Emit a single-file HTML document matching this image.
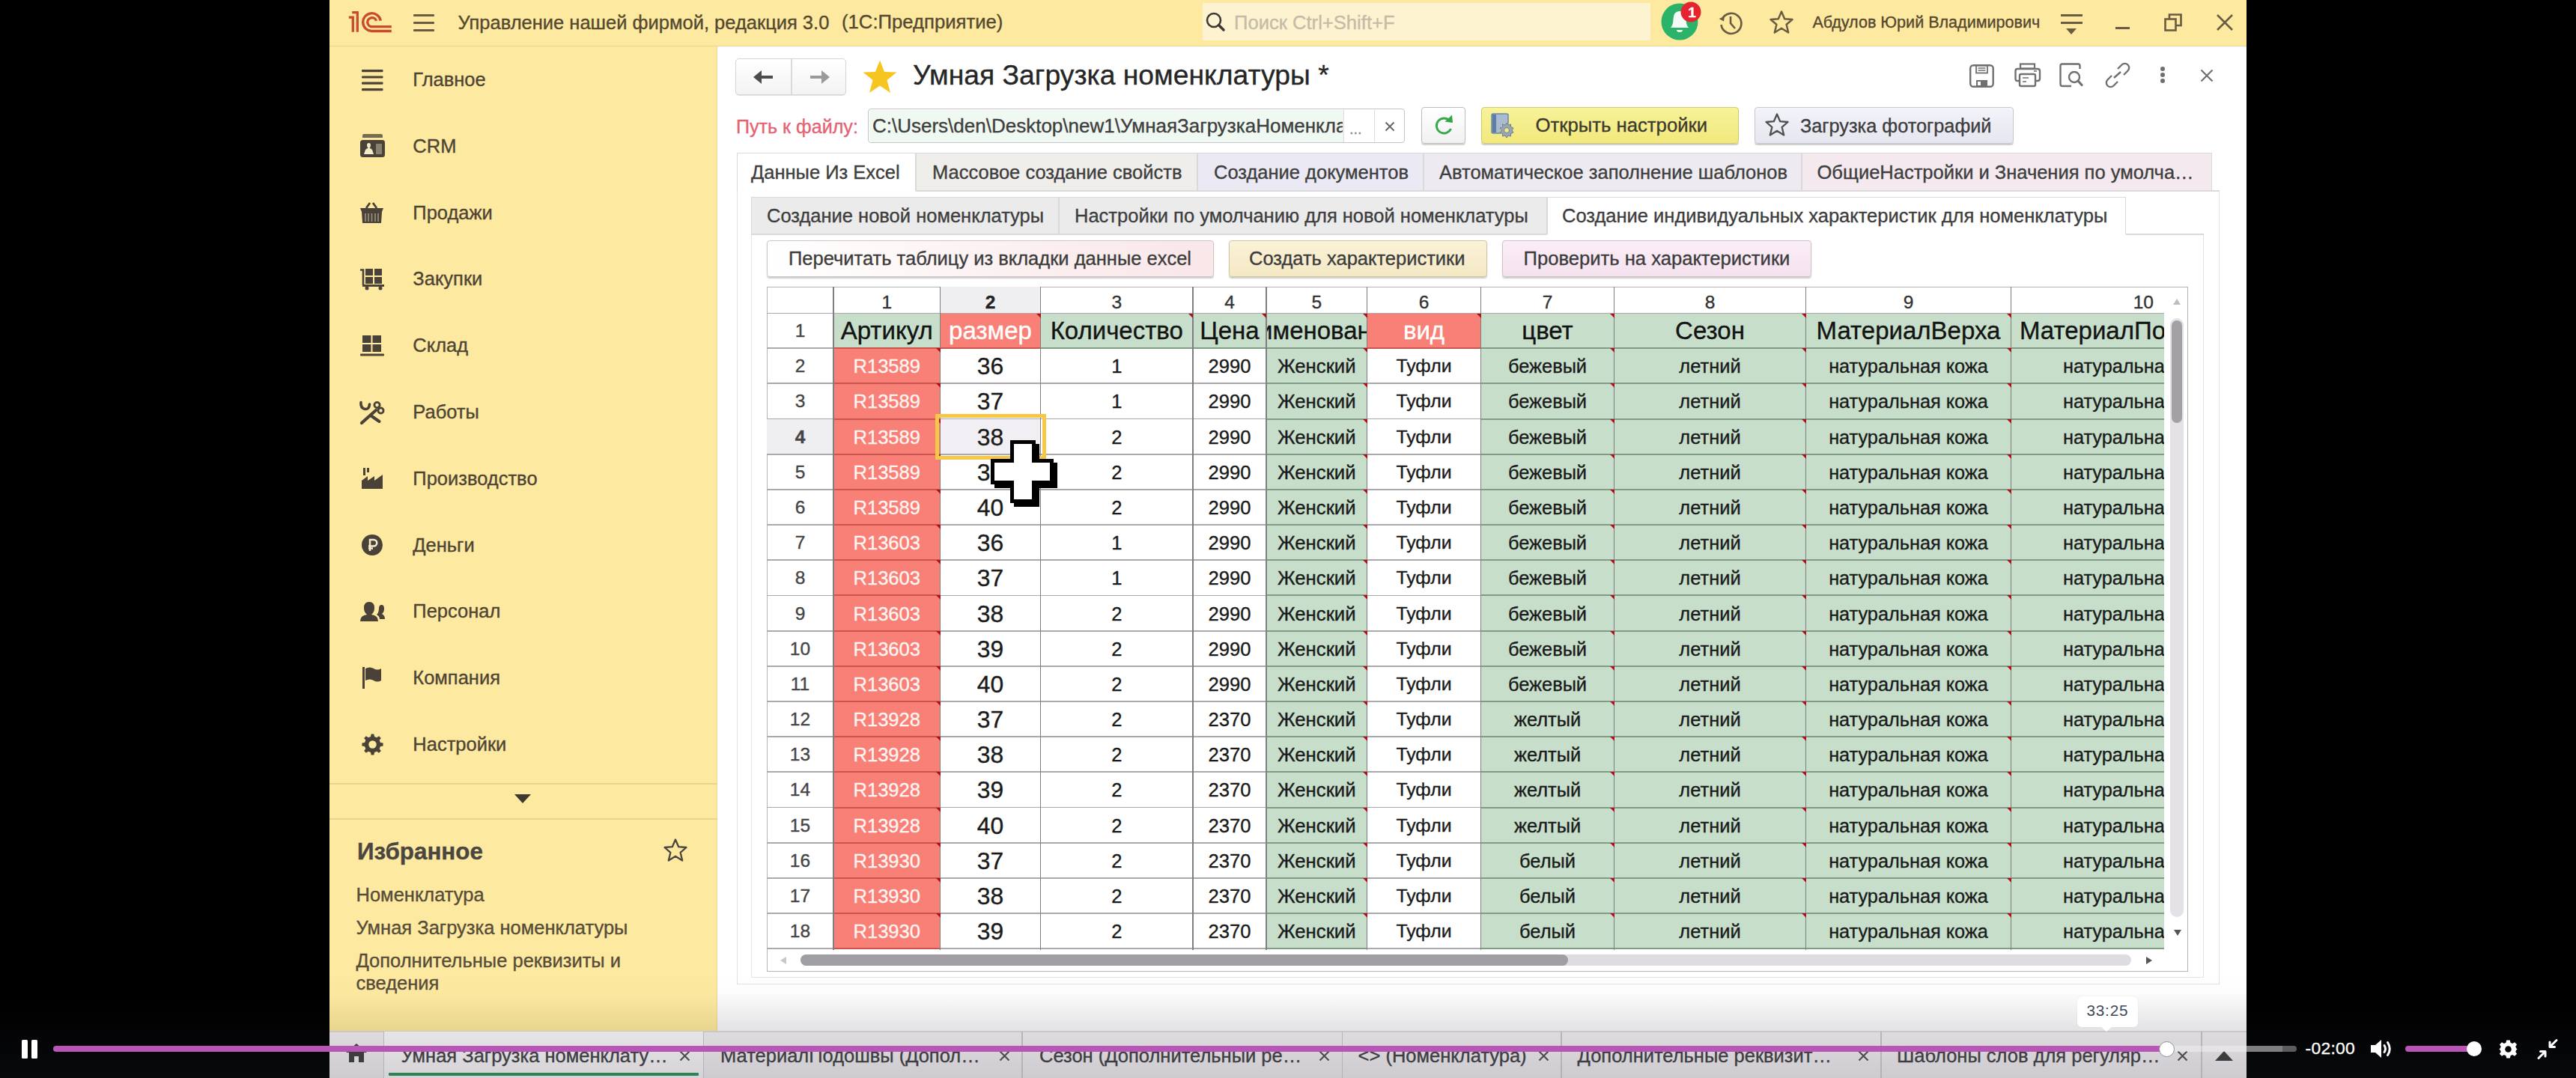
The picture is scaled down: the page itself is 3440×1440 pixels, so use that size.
<!DOCTYPE html><html><head><meta charset="utf-8"><style>
*{box-sizing:border-box;margin:0;padding:0}
html,body{width:3440px;height:1440px;overflow:hidden;background:#000;font-family:"Liberation Sans",sans-serif}
.t{position:absolute;white-space:pre;-webkit-text-stroke:0.35px currentColor}
.b{position:absolute}
svg{position:absolute;overflow:visible}
.tb .t{-webkit-text-stroke:0.35px currentColor}
</style></head><body>
<div class="b" style="left:440px;top:0px;width:2560px;height:1440px;background:#fff"></div>
<div class="b" style="left:440px;top:0px;width:2560px;height:61.5px;background:#FDE9A0;border-bottom:1.5px solid #E9D48C"></div>
<div class="b" style="left:440px;top:61.5px;width:518px;height:1316.5px;background:#FDE9A0;border-right:1px solid #EAD795"></div>
<svg style="left:465px;top:14px" width="62" height="32" viewBox="0 0 62 32">
<g fill="none" stroke="#C94A2D" stroke-width="3.3" stroke-linecap="butt" stroke-linejoin="miter">
<path d="M0.8 9.2 H6.3 V28.8"/><path d="M5.2 2.6 H12.3 V28.8"/>
<path d="M43.3 13.6 A11.9 11.9 0 1 0 31.8 27.5 H57.8"/>
<path d="M37.6 13.8 A6.05 6.05 0 1 0 32.25 21.7 H57.8"/>
</g></svg>
<div class="b" style="left:552px;top:18.799999999999997px;width:28px;height:3.2px;background:#6A5C42;border-radius:1px"></div>
<div class="b" style="left:552px;top:29.0px;width:28px;height:3.2px;background:#6A5C42;border-radius:1px"></div>
<div class="b" style="left:552px;top:38.8px;width:28px;height:3.2px;background:#6A5C42;border-radius:1px"></div>
<div class="t" style="left:611.5px;top:9.5px;height:40px;line-height:40px;font-size:25.5px;color:#54482F;">Управление нашей фирмой, редакция 3.0</div>
<div class="t" style="left:1124px;top:9.0px;height:41px;line-height:41px;font-size:25.7px;color:#54482F;">(1С:Предприятие)</div>
<div class="b" style="left:1606px;top:4px;width:598px;height:50px;background:#FEF3D0;border-radius:2px"></div>
<svg style="left:1610px;top:16px" width="30" height="30" viewBox="0 0 30 30">
<circle cx="11" cy="11" r="9" fill="none" stroke="#3E3A33" stroke-width="2.6"/>
<path d="M17.5 17.5 L24 24" stroke="#3E3A33" stroke-width="3.5" stroke-linecap="round"/></svg>
<div class="t" style="left:1648px;top:10.0px;height:40px;line-height:40px;font-size:25.6px;color:#C4BCA8;">Поиск Ctrl+Shift+F</div>
<svg style="left:2218px;top:4px" width="56" height="52" viewBox="0 0 56 52">
<circle cx="25" cy="25" r="24.5" fill="#2BB36A"/>
<path d="M13 33 C17 29 16 22 17 18 C18 13 21 11 25 11 C29 11 32 13 33 18 C34 22 33 29 37 33 Z" fill="#F4FBF6"/>
<path d="M21 36 H29 A4 3 0 0 1 21 36Z" fill="#F4FBF6"/>
<circle cx="40" cy="12" r="13.5" fill="#E52430"/>
</svg>
<div class="t" style="left:2253.5px;top:4.5px;height:24px;line-height:24px;font-size:19px;color:#fff;font-weight:700;width:12px;text-align:center;">1</div>
<svg style="left:2294px;top:13px" width="36" height="36" viewBox="0 0 36 36">
<path d="M5.5 13 A13.5 13.5 0 1 1 4.5 20" fill="none" stroke="#6A5C42" stroke-width="2.6"/>
<path d="M1.5 12 L8 15.5 L9 9 Z" fill="#6A5C42"/>
<path d="M17 9 V18 L23 25" fill="none" stroke="#6A5C42" stroke-width="2.6"/></svg>
<svg style="left:2362px;top:13px" width="34" height="34" viewBox="0 0 34 34">
<path d="M17 2.5 L21.2 12.2 L31.5 13 L23.6 19.8 L26.2 30.5 L17 24.8 L7.8 30.5 L10.4 19.8 L2.5 13 L12.8 12.2 Z" fill="none" stroke="#6A5C42" stroke-width="2.5" stroke-linejoin="round"/></svg>
<div class="t" style="left:2420.5px;top:12.5px;height:34px;line-height:34px;font-size:21.55px;color:#54482F;">Абдулов Юрий Владимирович</div>
<div class="b" style="left:2752px;top:18.8px;width:29px;height:3px;background:#6A5C42"></div>
<div class="b" style="left:2752px;top:28.8px;width:29px;height:3px;background:#6A5C42"></div>
<svg style="left:2759px;top:38px" width="14" height="9" viewBox="0 0 14 9"><path d="M0 0 H14 L7 8 Z" fill="#6A5C42"/></svg>
<div class="b" style="left:2825px;top:36px;width:19px;height:3.2px;background:#6A5C42"></div>
<svg style="left:2890px;top:18px" width="25" height="25" viewBox="0 0 25 25">
<rect x="1.5" y="7.5" width="14" height="15" fill="none" stroke="#6A5C42" stroke-width="2.6"/>
<path d="M7 7 V1.5 H22.5 V16 H16" fill="none" stroke="#6A5C42" stroke-width="2.6"/></svg>
<svg style="left:2960px;top:19px" width="22" height="22" viewBox="0 0 22 22">
<path d="M1 1 L21 21 M21 1 L1 21" stroke="#6A5C42" stroke-width="2.6"/></svg>
<svg style="left:482px;top:93px" width="36" height="36" viewBox="0 0 36 36" fill="#4A4238"><rect x="1" y="0" width="28.5" height="3.2" rx="1"/><rect x="1" y="8.4" width="28.5" height="3.2" rx="1"/><rect x="1" y="16.5" width="28.5" height="3.2" rx="1"/><rect x="1" y="25" width="28.5" height="3.2" rx="1"/></svg>
<div class="t" style="left:551.3px;top:86.0px;height:40px;line-height:40px;font-size:25.5px;color:#4E4434;">Главное</div>
<svg style="left:480.5px;top:179px" width="36" height="36" viewBox="0 0 36 36" fill="#4A4238"><path d="M3 2 Q3 0 5 0 H28 Q30 0 30 2 V5 H3Z" opacity="0.75"/><rect x="0" y="8" width="33" height="23" rx="3.5"/><path d="M5 27 L7 21 Q9 19 10.5 19 Q9 17 9 15 Q9 12 11.5 12 Q14 12 14 15 Q14 17 12.5 19 Q14 19 16 21 L18 27Z" fill="#F4EBC8"/><rect x="21" y="13" width="8" height="14" fill="#8A8070"/></svg>
<div class="t" style="left:551.3px;top:174.8px;height:40px;line-height:40px;font-size:25.5px;color:#4E4434;">CRM</div>
<svg style="left:481px;top:270px" width="36" height="36" viewBox="0 0 36 36" fill="#4A4238"><path d="M8 8 L13 1 M22 8 L17 1" stroke="#4A4238" stroke-width="2.8" fill="none"/><path d="M0 8 H31 L29 13 H2Z"/><path d="M2 13 H29 L28 28 H3Z"/><path d="M7 15 V26 M11 15 V26 M15.5 15 V26 M20 15 V26 M24 15 V26" stroke="#9C917D" stroke-width="1.6"/></svg>
<div class="t" style="left:551.3px;top:263.6px;height:40px;line-height:40px;font-size:25.5px;color:#4E4434;">Продажи</div>
<svg style="left:480.5px;top:358.5px" width="36" height="36" viewBox="0 0 36 36" fill="#4A4238"><path d="M0 1.5 H4 V22" stroke="#4A4238" stroke-width="2.6" fill="none"/><rect x="7" y="0" width="10" height="9"/><rect x="19" y="0" width="10" height="9"/><rect x="7" y="11" width="10" height="9"/><rect x="19" y="11" width="10" height="9"/><rect x="3" y="21" width="29" height="3"/><circle cx="9" cy="26" r="2.5"/><circle cx="27" cy="26" r="2.5"/></svg>
<div class="t" style="left:551.3px;top:352.4px;height:40px;line-height:40px;font-size:25.5px;color:#4E4434;">Закупки</div>
<svg style="left:480.5px;top:447.5px" width="36" height="36" viewBox="0 0 36 36" fill="#4A4238"><rect x="3" y="0" width="11.5" height="10"/><rect x="16.5" y="0" width="11.5" height="10"/><rect x="3" y="12" width="11.5" height="10"/><rect x="16.5" y="12" width="11.5" height="10"/><rect x="0" y="24.5" width="32" height="3" rx="1"/></svg>
<div class="t" style="left:551.3px;top:441.2px;height:40px;line-height:40px;font-size:25.5px;color:#4E4434;">Склад</div>
<svg style="left:480px;top:536px" width="36" height="36" viewBox="0 0 36 36" fill="#4A4238"><path d="M2 1.5 Q1 9 7.5 10.5 Q13 11 13.5 4" stroke="#4A4238" stroke-width="3.6" fill="none" stroke-linecap="round"/><path d="M3 29 L22 12" stroke="#4A4238" stroke-width="4.2" stroke-linecap="round"/><path d="M15 19 L26.5 27" stroke="#4A4238" stroke-width="4" stroke-linecap="round"/><circle cx="23.5" cy="5" r="3.6" fill="none" stroke="#4A4238" stroke-width="2.8"/><circle cx="28.5" cy="12.5" r="3.6" fill="none" stroke="#4A4238" stroke-width="2.8"/></svg>
<div class="t" style="left:551.3px;top:530.0px;height:40px;line-height:40px;font-size:25.5px;color:#4E4434;">Работы</div>
<svg style="left:482.5px;top:624.5px" width="36" height="36" viewBox="0 0 36 36" fill="#4A4238"><path d="M0 28 V17 L8 11 V17 L17 11 V17 L28 9 V28Z"/><rect x="2" y="0" width="3" height="10"/><rect x="7" y="0" width="3" height="6"/></svg>
<div class="t" style="left:551.3px;top:618.8px;height:40px;line-height:40px;font-size:25.5px;color:#4E4434;">Производство</div>
<svg style="left:482.7px;top:713.5px" width="36" height="36" viewBox="0 0 36 36" fill="#4A4238"><circle cx="14" cy="14" r="14"/><path d="M11 22 V7 H16 A4.2 4.2 0 0 1 16 15.5 H9 M9 18.5 H15" stroke="#F4EBC8" stroke-width="2.5" fill="none"/></svg>
<div class="t" style="left:551.3px;top:707.6px;height:40px;line-height:40px;font-size:25.5px;color:#4E4434;">Деньги</div>
<svg style="left:480.7px;top:802px" width="36" height="36" viewBox="0 0 36 36" fill="#4A4238"><path d="M0 28 Q0 20 9 19 Q5 16 5 10 Q5 2 12 2 Q19 2 19 10 Q19 16 15 19 Q24 20 24 28Z"/><path d="M22 19 Q25 16 25 11 Q25 6 28.5 6 Q32 6 32 11 Q32 16 29 18 Q33 20 33 25 H26 Q26 21 22 19Z"/></svg>
<div class="t" style="left:551.3px;top:796.4px;height:40px;line-height:40px;font-size:25.5px;color:#4E4434;">Персонал</div>
<svg style="left:484px;top:890.5px" width="36" height="36" viewBox="0 0 36 36" fill="#4A4238"><rect x="0" y="0" width="3" height="29"/><path d="M4 2 Q10 -1 15 2 Q20 5 25 2 V18 Q20 21 15 18 Q10 15 4 18Z"/></svg>
<div class="t" style="left:551.3px;top:885.2px;height:40px;line-height:40px;font-size:25.5px;color:#4E4434;">Компания</div>
<svg style="left:482.8px;top:980px" width="36" height="36" viewBox="0 0 36 36" fill="#4A4238"><path d="M25.00 11.98 L28.57 12.61 L28.57 16.39 L25.00 17.02 L23.71 20.14 L25.79 23.11 L23.11 25.79 L20.14 23.71 L17.02 25.00 L16.39 28.57 L12.61 28.57 L11.98 25.00 L8.86 23.71 L5.89 25.79 L3.21 23.11 L5.29 20.14 L4.00 17.02 L0.43 16.39 L0.43 12.61 L4.00 11.98 L5.29 8.86 L3.21 5.89 L5.89 3.21 L8.86 5.29 L11.98 4.00 L12.61 0.43 L16.39 0.43 L17.02 4.00 L20.14 5.29 L23.11 3.21 L25.79 5.89 L23.71 8.86Z"/><circle cx="14.5" cy="14.5" r="5.2" fill="#FDE9A0"/></svg>
<div class="t" style="left:551.3px;top:974.0px;height:40px;line-height:40px;font-size:25.5px;color:#4E4434;">Настройки</div>
<div class="b" style="left:440px;top:1046px;width:518px;height:2px;background:#E9D48E"></div>
<div class="b" style="left:440px;top:1092.5px;width:518px;height:2px;background:#E9D48E"></div>
<svg style="left:687px;top:1061px" width="22" height="14" viewBox="0 0 22 14"><path d="M0 0 H22 L11 12Z" fill="#3E3830"/></svg>
<div class="t" style="left:477px;top:1113.0px;height:50px;line-height:50px;font-size:31.4px;color:#4A4640;font-weight:700;">Избранное</div>
<svg style="left:885px;top:1119px" width="34" height="34" viewBox="0 0 34 34">
<path d="M17 2.5 L21.2 12.2 L31.5 13 L23.6 19.8 L26.2 30.5 L17 24.8 L7.8 30.5 L10.4 19.8 L2.5 13 L12.8 12.2 Z" fill="none" stroke="#4A4640" stroke-width="2.3" stroke-linejoin="round"/></svg>
<div class="t" style="left:475.5px;top:1175.0px;height:40px;line-height:40px;font-size:25.5px;color:#574C38;">Номенклатура</div>
<div class="t" style="left:475.5px;top:1219.0px;height:40px;line-height:40px;font-size:25.5px;color:#574C38;">Умная Загрузка номенклатуры</div>
<div class="t" style="left:475.5px;top:1263.0px;height:40px;line-height:40px;font-size:25.5px;color:#574C38;">Дополнительные реквизиты и</div>
<div class="t" style="left:475.5px;top:1293.0px;height:40px;line-height:40px;font-size:25.5px;color:#574C38;">сведения</div>
<div class="b" style="left:982px;top:78px;width:147.5px;height:49px;border:1.5px solid #D6D4DC;border-radius:5px;background:linear-gradient(#FFFFFF,#F3F3F3);box-shadow:0 1px 1px rgba(0,0,0,0.12)"></div>
<div class="b" style="left:1056px;top:79px;width:1.5px;height:47px;background:#DADADA"></div>
<svg style="left:1006px;top:92px" width="28" height="22" viewBox="0 0 28 22"><path d="M26 11 H8" stroke="#4D4D4D" stroke-width="4"/><path d="M0 11 L11 2 V20Z" fill="#4D4D4D"/></svg>
<svg style="left:1080px;top:92px" width="28" height="22" viewBox="0 0 28 22"><path d="M2 11 H20" stroke="#9A9A9A" stroke-width="4"/><path d="M28 11 L17 2 V20Z" fill="#9A9A9A"/></svg>
<svg style="left:1150px;top:79px" width="50" height="48" viewBox="0 0 50 48">
<path d="M25 1.5 L31 17 L47.5 17.5 L34.5 28 L39 45 L25 35.5 L11 45 L15.5 28 L2.5 17.5 L19 17 Z" fill="#F7C520"/></svg>
<div class="t" style="left:1219px;top:71.3px;height:59px;line-height:59px;font-size:37.3px;color:#262626;">Умная Загрузка номенклатуры *</div>
<svg style="left:2630px;top:86px" width="34" height="31" viewBox="0 0 34 31">
<rect x="1.2" y="1.2" width="30.5" height="28.5" rx="4" fill="none" stroke="#707070" stroke-width="2.4"/>
<rect x="9" y="1.5" width="15" height="10" fill="none" stroke="#707070" stroke-width="1.8"/>
<path d="M11.5 5 H21.5 M11.5 8 H21.5" stroke="#707070" stroke-width="1.4"/>
<rect x="9" y="21" width="15" height="8" fill="#707070"/><rect x="11" y="23" width="4" height="5" fill="#fff"/></svg>
<svg style="left:2690px;top:84px" width="36" height="33" viewBox="0 0 36 33">
<rect x="8" y="1.5" width="19" height="6" fill="none" stroke="#707070" stroke-width="2.2"/>
<path d="M7 24 H4 Q1.5 24 1.5 21 V11 Q1.5 8 4 8 H31 Q34 8 34 11 V21 Q34 24 31 24 H28" fill="none" stroke="#707070" stroke-width="2.4"/>
<rect x="7" y="15" width="21" height="16" rx="2" fill="#fff" stroke="#707070" stroke-width="2.4"/>
<path d="M11 20 H19 M11 25 H16 M26 11 H30" stroke="#707070" stroke-width="1.5"/></svg>
<svg style="left:2750px;top:84px" width="36" height="33" viewBox="0 0 36 33">
<path d="M16 31 H4 Q1.5 31 1.5 28 V4 Q1.5 1.5 4 1.5 H25 Q27.5 1.5 27.5 4 V8" fill="none" stroke="#707070" stroke-width="2.4"/>
<circle cx="20" cy="19" r="7" fill="none" stroke="#707070" stroke-width="2.4"/>
<path d="M25 24 L30 29.5" stroke="#707070" stroke-width="3.2" stroke-linecap="round"/></svg>
<svg style="left:2810px;top:84px" width="36" height="33" viewBox="0 0 36 33">
<path d="M13 20 L22 12" stroke="#707070" stroke-width="2.4"/>
<path d="M10 17 L4.5 22.5 A5.5 5.5 0 0 0 12.5 30.5 L18 25" fill="none" stroke="#707070" stroke-width="2.4"/>
<path d="M18 8 L23.5 2.5 A5.5 5.5 0 0 1 31.5 10.5 L26 16" fill="none" stroke="#707070" stroke-width="2.4"/></svg>
<div class="b" style="left:2884.5px;top:88.7px;width:6px;height:6px;background:#707070;border-radius:50%"></div>
<div class="b" style="left:2884.5px;top:97px;width:6px;height:6px;background:#707070;border-radius:50%"></div>
<div class="b" style="left:2884.5px;top:105.3px;width:6px;height:6px;background:#707070;border-radius:50%"></div>
<svg style="left:2938px;top:92px" width="18" height="18" viewBox="0 0 18 18"><path d="M1.5 1.5 L16.5 16.5 M16.5 1.5 L1.5 16.5" stroke="#707070" stroke-width="2.2"/></svg>
<div class="t" style="left:983px;top:148.5px;height:40px;line-height:40px;font-size:25.1px;color:#E46272;">Путь к файлу:</div>
<div class="b" style="left:1159px;top:145px;width:717px;height:46px;border:1.5px solid #C6C4CA;border-radius:4px;background:#fff"></div>
<div class="b" style="left:1160.5px;top:146.5px;width:633px;height:43px;background:#EFF9F1"></div>
<div class="b" style="left:1793.5px;top:146.5px;width:1.5px;height:43px;background:#DCDCDC"></div>
<div class="b" style="left:1834.5px;top:146.5px;width:1.5px;height:43px;background:#DCDCDC"></div>
<div class="t" style="left:1165px;top:147px;width:628px;height:43px;line-height:43px;font-size:26px;color:#3E3E3E;overflow:hidden">C:\Users\den\Desktop\new1\УмнаяЗагрузкаНоменклатуры.xlsx</div>
<div class="t" style="left:1802px;top:156.0px;height:32px;line-height:32px;font-size:20px;color:#8A8A8A;">...</div>
<svg style="left:1849px;top:162px" width="14" height="14" viewBox="0 0 14 14"><path d="M1.5 1.5 L12.5 12.5 M12.5 1.5 L1.5 12.5" stroke="#666" stroke-width="2"/></svg>
<div class="b" style="left:1898px;top:143px;width:58.5px;height:48.5px;border:1.5px solid #BFBDC3;border-radius:4px;background:linear-gradient(#FFFFFF,#F1F1F1);box-shadow:0 1.5px 1px rgba(0,0,0,0.18)"></div>
<svg style="left:1913px;top:153px" width="30" height="30" viewBox="0 0 30 30">
<path d="M23 8.5 A10 10 0 1 0 24.5 19" fill="none" stroke="#38A84C" stroke-width="2.9"/>
<path d="M16.5 9.5 L27 11 L26 0.5Z" fill="#32A64A"/></svg>
<div class="b" style="left:1978px;top:143px;width:344px;height:48.5px;border:1.5px solid #CFC77A;border-radius:4px;background:linear-gradient(#F8F29A,#F1E97C);box-shadow:0 1.5px 1px rgba(0,0,0,0.2)"></div>
<svg style="left:1990px;top:150px" width="36" height="36" viewBox="0 0 36 36">
<rect x="2" y="2" width="22" height="26" rx="2" fill="#A9BBD3" stroke="#6E86A8" stroke-width="1.5"/>
<rect x="3" y="3" width="5" height="24" fill="#5E7EA8"/>
<circle cx="22" cy="24" r="9" fill="#F1EA80"/>
<path d="M22 14 L24 17 L27.5 16 L27.5 19.5 L31 21 L29 24 L31 27 L27.5 28.5 L27.5 32 L24 31 L22 34 L20 31 L16.5 32 L16.5 28.5 L13 27 L15 24 L13 21 L16.5 19.5 L16.5 16 L20 17Z" fill="#9AA6B5" stroke="#6F7D90" stroke-width="1"/>
<circle cx="22" cy="24" r="3.5" fill="#F1EA80" stroke="#6F7D90" stroke-width="1"/></svg>
<div class="t" style="left:2050.5px;top:147.0px;height:41px;line-height:41px;font-size:25.7px;color:#3D3A2E;">Открыть настройки</div>
<div class="b" style="left:2343px;top:143px;width:345.5px;height:48.5px;border:1.5px solid #C8C8D2;border-radius:4px;background:linear-gradient(#F3F3FA,#E6E6F0);box-shadow:0 1.5px 1px rgba(0,0,0,0.2)"></div>
<svg style="left:2356px;top:150px" width="34" height="34" viewBox="0 0 34 34">
<path d="M17 2.5 L21.2 12.2 L31.5 13 L23.6 19.8 L26.2 30.5 L17 24.8 L7.8 30.5 L10.4 19.8 L2.5 13 L12.8 12.2 Z" fill="none" stroke="#505050" stroke-width="2.3" stroke-linejoin="round"/></svg>
<div class="t" style="left:2404px;top:147.5px;height:40px;line-height:40px;font-size:25.3px;color:#3D3D3D;">Загрузка фотографий</div>
<div class="b" style="left:984px;top:254.5px;width:1980px;height:1060px;border:1.5px solid #E2E2E2;border-top:none;background:#fff"></div>
<div class="b" style="left:984px;top:204px;width:239px;height:51px;background:#FFFFFF;border:1.5px solid #DADADA;border-bottom:none;"></div>
<div class="t" style="left:1003px;top:209.5px;height:40px;line-height:40px;font-size:25.5px;color:#3E3E3E;">Данные Из Excel</div>
<div class="b" style="left:1223px;top:204px;width:376px;height:51px;background:#F0EEEA;border:1.5px solid #DADADA;"></div>
<div class="t" style="left:1245px;top:209.5px;height:40px;line-height:40px;font-size:25.5px;color:#3E3E3E;">Массовое создание свойств</div>
<div class="b" style="left:1599px;top:204px;width:302px;height:51px;background:#EAE9F4;border:1.5px solid #DADADA;"></div>
<div class="t" style="left:1621px;top:209.5px;height:40px;line-height:40px;font-size:25.5px;color:#3E3E3E;">Создание документов</div>
<div class="b" style="left:1901px;top:204px;width:505px;height:51px;background:#EDEBF1;border:1.5px solid #DADADA;"></div>
<div class="t" style="left:1922px;top:209.5px;height:40px;line-height:40px;font-size:25.5px;color:#3E3E3E;">Автоматическое заполнение шаблонов</div>
<div class="b" style="left:2406px;top:204px;width:548px;height:51px;background:#F3E9EE;border:1.5px solid #DADADA;"></div>
<div class="t" style="left:2426.5px;top:209.5px;height:40px;line-height:40px;font-size:25.5px;color:#3E3E3E;">ОбщиеНастройки и Значения по умолча…</div>
<div class="b" style="left:1223px;top:254px;width:1741px;height:1.5px;background:#DADADA"></div>
<div class="b" style="left:1003px;top:312.5px;width:1940px;height:993.5px;border:1.5px solid #E4E4E4;border-top:none;background:#fff"></div>
<div class="b" style="left:1003px;top:262.5px;width:410.5999999999999px;height:50.5px;background:#EBEBEB;border:1.5px solid #DADADA;"></div>
<div class="t" style="left:1024px;top:268.0px;height:40px;line-height:40px;font-size:25.5px;color:#3E3E3E;">Создание новой номенклатуры</div>
<div class="b" style="left:1413.6px;top:262.5px;width:652.0999999999999px;height:50.5px;background:#EBEBEB;border:1.5px solid #DADADA;"></div>
<div class="t" style="left:1435px;top:268.0px;height:40px;line-height:40px;font-size:25.5px;color:#3E3E3E;">Настройки по умолчанию для новой номенклатуры</div>
<div class="b" style="left:2065.7px;top:262.5px;width:772.9000000000001px;height:50.5px;background:#FFFFFF;border:1.5px solid #DADADA;border-bottom:none;"></div>
<div class="t" style="left:2086px;top:268.0px;height:40px;line-height:40px;font-size:25.5px;color:#3E3E3E;">Создание индивидуальных характеристик для номенклатуры</div>
<div class="b" style="left:1003px;top:312px;width:1062.7px;height:1.5px;background:#DADADA"></div>
<div class="b" style="left:2838.6px;top:312px;width:104.4px;height:1.5px;background:#DADADA"></div>
<div class="b" style="left:1024px;top:320.7px;width:597.3px;height:49px;border:1.5px solid #CFC5C7;border-radius:4px;background:linear-gradient(90deg,#FFFFFF,#FCEFF0 60%,#F9E7EA);box-shadow:0 1.5px 1.5px rgba(0,0,0,0.2)"></div>
<div class="t" style="left:1053px;top:325.0px;height:40px;line-height:40px;font-size:25.5px;color:#3C3C3C;">Перечитать таблицу из вкладки данные excel</div>
<div class="b" style="left:1640.7px;top:320.7px;width:345.29999999999995px;height:49px;border:1.5px solid #CFC6A8;border-radius:4px;background:linear-gradient(#FBF3D8,#F4E8C4);box-shadow:0 1.5px 1.5px rgba(0,0,0,0.2)"></div>
<div class="t" style="left:1668px;top:325.0px;height:40px;line-height:40px;font-size:25.5px;color:#3C3C3C;">Создать характеристики</div>
<div class="b" style="left:2006px;top:320.7px;width:413px;height:49px;border:1.5px solid #CEC3CB;border-radius:4px;background:linear-gradient(#FBEEF7,#F5E2EF);box-shadow:0 1.5px 1.5px rgba(0,0,0,0.2)"></div>
<div class="t" style="left:2034.6px;top:325.0px;height:40px;line-height:40px;font-size:25.6px;color:#3C3C3C;">Проверить на характеристики</div>
<div class="b" style="left:1024px;top:382.5px;width:1898px;height:915.5px;border:1.5px solid #B4B4B4;background:#fff"></div>
<div class="b tb" style="left:1024px;top:382.5px;width:1866px;height:886.0px;overflow:hidden">
<div class="b" style="left:231.50px;top:0.00px;width:134.00px;height:36.00px;background:#EFEEF1"></div>
<div class="b" style="left:0.00px;top:177.06px;width:89.00px;height:47.18px;background:#EFEEF1"></div>
<div class="b" style="left:89.00px;top:36.00px;width:142.50px;height:46.70px;background:#C6DECA"></div>
<div class="b" style="left:231.50px;top:36.00px;width:134.00px;height:46.70px;background:#F88077"></div>
<div class="b" style="left:365.50px;top:36.00px;width:203.50px;height:46.70px;background:#C6DECA"></div>
<div class="b" style="left:569.00px;top:36.00px;width:98.00px;height:46.70px;background:#C6DECA"></div>
<div class="b" style="left:667.00px;top:36.00px;width:134.50px;height:46.70px;background:#C6DECA"></div>
<div class="b" style="left:801.50px;top:36.00px;width:152.00px;height:46.70px;background:#F88077"></div>
<div class="b" style="left:953.50px;top:36.00px;width:178.00px;height:46.70px;background:#C6DECA"></div>
<div class="b" style="left:1131.50px;top:36.00px;width:256.00px;height:46.70px;background:#C6DECA"></div>
<div class="b" style="left:1387.50px;top:36.00px;width:274.00px;height:46.70px;background:#C6DECA"></div>
<div class="b" style="left:1661.50px;top:36.00px;width:274.50px;height:46.70px;background:#C6DECA"></div>
<div class="b" style="left:89.00px;top:82.70px;width:142.50px;height:47.18px;background:#F88077"></div>
<div class="b" style="left:667.00px;top:82.70px;width:134.50px;height:47.18px;background:#C6DECA"></div>
<div class="b" style="left:953.50px;top:82.70px;width:178.00px;height:47.18px;background:#C6DECA"></div>
<div class="b" style="left:1131.50px;top:82.70px;width:256.00px;height:47.18px;background:#C6DECA"></div>
<div class="b" style="left:1387.50px;top:82.70px;width:274.00px;height:47.18px;background:#C6DECA"></div>
<div class="b" style="left:1661.50px;top:82.70px;width:274.50px;height:47.18px;background:#C6DECA"></div>
<div class="b" style="left:89.00px;top:129.88px;width:142.50px;height:47.18px;background:#F88077"></div>
<div class="b" style="left:667.00px;top:129.88px;width:134.50px;height:47.18px;background:#C6DECA"></div>
<div class="b" style="left:953.50px;top:129.88px;width:178.00px;height:47.18px;background:#C6DECA"></div>
<div class="b" style="left:1131.50px;top:129.88px;width:256.00px;height:47.18px;background:#C6DECA"></div>
<div class="b" style="left:1387.50px;top:129.88px;width:274.00px;height:47.18px;background:#C6DECA"></div>
<div class="b" style="left:1661.50px;top:129.88px;width:274.50px;height:47.18px;background:#C6DECA"></div>
<div class="b" style="left:89.00px;top:177.06px;width:142.50px;height:47.18px;background:#F88077"></div>
<div class="b" style="left:667.00px;top:177.06px;width:134.50px;height:47.18px;background:#C6DECA"></div>
<div class="b" style="left:953.50px;top:177.06px;width:178.00px;height:47.18px;background:#C6DECA"></div>
<div class="b" style="left:1131.50px;top:177.06px;width:256.00px;height:47.18px;background:#C6DECA"></div>
<div class="b" style="left:1387.50px;top:177.06px;width:274.00px;height:47.18px;background:#C6DECA"></div>
<div class="b" style="left:1661.50px;top:177.06px;width:274.50px;height:47.18px;background:#C6DECA"></div>
<div class="b" style="left:89.00px;top:224.24px;width:142.50px;height:47.18px;background:#F88077"></div>
<div class="b" style="left:667.00px;top:224.24px;width:134.50px;height:47.18px;background:#C6DECA"></div>
<div class="b" style="left:953.50px;top:224.24px;width:178.00px;height:47.18px;background:#C6DECA"></div>
<div class="b" style="left:1131.50px;top:224.24px;width:256.00px;height:47.18px;background:#C6DECA"></div>
<div class="b" style="left:1387.50px;top:224.24px;width:274.00px;height:47.18px;background:#C6DECA"></div>
<div class="b" style="left:1661.50px;top:224.24px;width:274.50px;height:47.18px;background:#C6DECA"></div>
<div class="b" style="left:89.00px;top:271.42px;width:142.50px;height:47.18px;background:#F88077"></div>
<div class="b" style="left:667.00px;top:271.42px;width:134.50px;height:47.18px;background:#C6DECA"></div>
<div class="b" style="left:953.50px;top:271.42px;width:178.00px;height:47.18px;background:#C6DECA"></div>
<div class="b" style="left:1131.50px;top:271.42px;width:256.00px;height:47.18px;background:#C6DECA"></div>
<div class="b" style="left:1387.50px;top:271.42px;width:274.00px;height:47.18px;background:#C6DECA"></div>
<div class="b" style="left:1661.50px;top:271.42px;width:274.50px;height:47.18px;background:#C6DECA"></div>
<div class="b" style="left:89.00px;top:318.60px;width:142.50px;height:47.18px;background:#F88077"></div>
<div class="b" style="left:667.00px;top:318.60px;width:134.50px;height:47.18px;background:#C6DECA"></div>
<div class="b" style="left:953.50px;top:318.60px;width:178.00px;height:47.18px;background:#C6DECA"></div>
<div class="b" style="left:1131.50px;top:318.60px;width:256.00px;height:47.18px;background:#C6DECA"></div>
<div class="b" style="left:1387.50px;top:318.60px;width:274.00px;height:47.18px;background:#C6DECA"></div>
<div class="b" style="left:1661.50px;top:318.60px;width:274.50px;height:47.18px;background:#C6DECA"></div>
<div class="b" style="left:89.00px;top:365.78px;width:142.50px;height:47.18px;background:#F88077"></div>
<div class="b" style="left:667.00px;top:365.78px;width:134.50px;height:47.18px;background:#C6DECA"></div>
<div class="b" style="left:953.50px;top:365.78px;width:178.00px;height:47.18px;background:#C6DECA"></div>
<div class="b" style="left:1131.50px;top:365.78px;width:256.00px;height:47.18px;background:#C6DECA"></div>
<div class="b" style="left:1387.50px;top:365.78px;width:274.00px;height:47.18px;background:#C6DECA"></div>
<div class="b" style="left:1661.50px;top:365.78px;width:274.50px;height:47.18px;background:#C6DECA"></div>
<div class="b" style="left:89.00px;top:412.96px;width:142.50px;height:47.18px;background:#F88077"></div>
<div class="b" style="left:667.00px;top:412.96px;width:134.50px;height:47.18px;background:#C6DECA"></div>
<div class="b" style="left:953.50px;top:412.96px;width:178.00px;height:47.18px;background:#C6DECA"></div>
<div class="b" style="left:1131.50px;top:412.96px;width:256.00px;height:47.18px;background:#C6DECA"></div>
<div class="b" style="left:1387.50px;top:412.96px;width:274.00px;height:47.18px;background:#C6DECA"></div>
<div class="b" style="left:1661.50px;top:412.96px;width:274.50px;height:47.18px;background:#C6DECA"></div>
<div class="b" style="left:89.00px;top:460.14px;width:142.50px;height:47.18px;background:#F88077"></div>
<div class="b" style="left:667.00px;top:460.14px;width:134.50px;height:47.18px;background:#C6DECA"></div>
<div class="b" style="left:953.50px;top:460.14px;width:178.00px;height:47.18px;background:#C6DECA"></div>
<div class="b" style="left:1131.50px;top:460.14px;width:256.00px;height:47.18px;background:#C6DECA"></div>
<div class="b" style="left:1387.50px;top:460.14px;width:274.00px;height:47.18px;background:#C6DECA"></div>
<div class="b" style="left:1661.50px;top:460.14px;width:274.50px;height:47.18px;background:#C6DECA"></div>
<div class="b" style="left:89.00px;top:507.32px;width:142.50px;height:47.18px;background:#F88077"></div>
<div class="b" style="left:667.00px;top:507.32px;width:134.50px;height:47.18px;background:#C6DECA"></div>
<div class="b" style="left:953.50px;top:507.32px;width:178.00px;height:47.18px;background:#C6DECA"></div>
<div class="b" style="left:1131.50px;top:507.32px;width:256.00px;height:47.18px;background:#C6DECA"></div>
<div class="b" style="left:1387.50px;top:507.32px;width:274.00px;height:47.18px;background:#C6DECA"></div>
<div class="b" style="left:1661.50px;top:507.32px;width:274.50px;height:47.18px;background:#C6DECA"></div>
<div class="b" style="left:89.00px;top:554.50px;width:142.50px;height:47.18px;background:#F88077"></div>
<div class="b" style="left:667.00px;top:554.50px;width:134.50px;height:47.18px;background:#C6DECA"></div>
<div class="b" style="left:953.50px;top:554.50px;width:178.00px;height:47.18px;background:#C6DECA"></div>
<div class="b" style="left:1131.50px;top:554.50px;width:256.00px;height:47.18px;background:#C6DECA"></div>
<div class="b" style="left:1387.50px;top:554.50px;width:274.00px;height:47.18px;background:#C6DECA"></div>
<div class="b" style="left:1661.50px;top:554.50px;width:274.50px;height:47.18px;background:#C6DECA"></div>
<div class="b" style="left:89.00px;top:601.68px;width:142.50px;height:47.18px;background:#F88077"></div>
<div class="b" style="left:667.00px;top:601.68px;width:134.50px;height:47.18px;background:#C6DECA"></div>
<div class="b" style="left:953.50px;top:601.68px;width:178.00px;height:47.18px;background:#C6DECA"></div>
<div class="b" style="left:1131.50px;top:601.68px;width:256.00px;height:47.18px;background:#C6DECA"></div>
<div class="b" style="left:1387.50px;top:601.68px;width:274.00px;height:47.18px;background:#C6DECA"></div>
<div class="b" style="left:1661.50px;top:601.68px;width:274.50px;height:47.18px;background:#C6DECA"></div>
<div class="b" style="left:89.00px;top:648.86px;width:142.50px;height:47.18px;background:#F88077"></div>
<div class="b" style="left:667.00px;top:648.86px;width:134.50px;height:47.18px;background:#C6DECA"></div>
<div class="b" style="left:953.50px;top:648.86px;width:178.00px;height:47.18px;background:#C6DECA"></div>
<div class="b" style="left:1131.50px;top:648.86px;width:256.00px;height:47.18px;background:#C6DECA"></div>
<div class="b" style="left:1387.50px;top:648.86px;width:274.00px;height:47.18px;background:#C6DECA"></div>
<div class="b" style="left:1661.50px;top:648.86px;width:274.50px;height:47.18px;background:#C6DECA"></div>
<div class="b" style="left:89.00px;top:696.04px;width:142.50px;height:47.18px;background:#F88077"></div>
<div class="b" style="left:667.00px;top:696.04px;width:134.50px;height:47.18px;background:#C6DECA"></div>
<div class="b" style="left:953.50px;top:696.04px;width:178.00px;height:47.18px;background:#C6DECA"></div>
<div class="b" style="left:1131.50px;top:696.04px;width:256.00px;height:47.18px;background:#C6DECA"></div>
<div class="b" style="left:1387.50px;top:696.04px;width:274.00px;height:47.18px;background:#C6DECA"></div>
<div class="b" style="left:1661.50px;top:696.04px;width:274.50px;height:47.18px;background:#C6DECA"></div>
<div class="b" style="left:89.00px;top:743.22px;width:142.50px;height:47.18px;background:#F88077"></div>
<div class="b" style="left:667.00px;top:743.22px;width:134.50px;height:47.18px;background:#C6DECA"></div>
<div class="b" style="left:953.50px;top:743.22px;width:178.00px;height:47.18px;background:#C6DECA"></div>
<div class="b" style="left:1131.50px;top:743.22px;width:256.00px;height:47.18px;background:#C6DECA"></div>
<div class="b" style="left:1387.50px;top:743.22px;width:274.00px;height:47.18px;background:#C6DECA"></div>
<div class="b" style="left:1661.50px;top:743.22px;width:274.50px;height:47.18px;background:#C6DECA"></div>
<div class="b" style="left:89.00px;top:790.40px;width:142.50px;height:47.18px;background:#F88077"></div>
<div class="b" style="left:667.00px;top:790.40px;width:134.50px;height:47.18px;background:#C6DECA"></div>
<div class="b" style="left:953.50px;top:790.40px;width:178.00px;height:47.18px;background:#C6DECA"></div>
<div class="b" style="left:1131.50px;top:790.40px;width:256.00px;height:47.18px;background:#C6DECA"></div>
<div class="b" style="left:1387.50px;top:790.40px;width:274.00px;height:47.18px;background:#C6DECA"></div>
<div class="b" style="left:1661.50px;top:790.40px;width:274.50px;height:47.18px;background:#C6DECA"></div>
<div class="b" style="left:89.00px;top:837.58px;width:142.50px;height:47.18px;background:#F88077"></div>
<div class="b" style="left:667.00px;top:837.58px;width:134.50px;height:47.18px;background:#C6DECA"></div>
<div class="b" style="left:953.50px;top:837.58px;width:178.00px;height:47.18px;background:#C6DECA"></div>
<div class="b" style="left:1131.50px;top:837.58px;width:256.00px;height:47.18px;background:#C6DECA"></div>
<div class="b" style="left:1387.50px;top:837.58px;width:274.00px;height:47.18px;background:#C6DECA"></div>
<div class="b" style="left:1661.50px;top:837.58px;width:274.50px;height:47.18px;background:#C6DECA"></div>
<div class="b" style="left:231.50px;top:177.06px;width:134.00px;height:47.18px;background:#F1EFF3"></div>
<div class="b" style="left:0.00px;top:35.10px;width:1866.00px;height:1.80px;background:#ABA9AD"></div>
<div class="b" style="left:0.00px;top:81.80px;width:1866.00px;height:1.80px;background:#ABA9AD"></div>
<div class="b" style="left:89.00px;top:81.70px;width:142.50px;height:2.00px;background:#C9554F"></div>
<div class="b" style="left:667.00px;top:81.70px;width:134.50px;height:2.00px;background:#819C86"></div>
<div class="b" style="left:953.50px;top:81.70px;width:178.00px;height:2.00px;background:#819C86"></div>
<div class="b" style="left:1131.50px;top:81.70px;width:256.00px;height:2.00px;background:#819C86"></div>
<div class="b" style="left:1387.50px;top:81.70px;width:274.00px;height:2.00px;background:#819C86"></div>
<div class="b" style="left:1661.50px;top:81.70px;width:274.50px;height:2.00px;background:#819C86"></div>
<div class="b" style="left:365.50px;top:81.70px;width:203.50px;height:2.00px;background:#819C86"></div>
<div class="b" style="left:569.00px;top:81.70px;width:98.00px;height:2.00px;background:#819C86"></div>
<div class="b" style="left:231.50px;top:81.70px;width:134.00px;height:2.00px;background:#C9554F"></div>
<div class="b" style="left:801.50px;top:81.70px;width:152.00px;height:2.00px;background:#C9554F"></div>
<div class="b" style="left:0.00px;top:128.98px;width:1866.00px;height:1.80px;background:#ABA9AD"></div>
<div class="b" style="left:89.00px;top:128.88px;width:142.50px;height:2.00px;background:#C9554F"></div>
<div class="b" style="left:667.00px;top:128.88px;width:134.50px;height:2.00px;background:#819C86"></div>
<div class="b" style="left:953.50px;top:128.88px;width:178.00px;height:2.00px;background:#819C86"></div>
<div class="b" style="left:1131.50px;top:128.88px;width:256.00px;height:2.00px;background:#819C86"></div>
<div class="b" style="left:1387.50px;top:128.88px;width:274.00px;height:2.00px;background:#819C86"></div>
<div class="b" style="left:1661.50px;top:128.88px;width:274.50px;height:2.00px;background:#819C86"></div>
<div class="b" style="left:0.00px;top:176.16px;width:1866.00px;height:1.80px;background:#ABA9AD"></div>
<div class="b" style="left:89.00px;top:176.06px;width:142.50px;height:2.00px;background:#C9554F"></div>
<div class="b" style="left:667.00px;top:176.06px;width:134.50px;height:2.00px;background:#819C86"></div>
<div class="b" style="left:953.50px;top:176.06px;width:178.00px;height:2.00px;background:#819C86"></div>
<div class="b" style="left:1131.50px;top:176.06px;width:256.00px;height:2.00px;background:#819C86"></div>
<div class="b" style="left:1387.50px;top:176.06px;width:274.00px;height:2.00px;background:#819C86"></div>
<div class="b" style="left:1661.50px;top:176.06px;width:274.50px;height:2.00px;background:#819C86"></div>
<div class="b" style="left:0.00px;top:223.34px;width:1866.00px;height:1.80px;background:#ABA9AD"></div>
<div class="b" style="left:89.00px;top:223.24px;width:142.50px;height:2.00px;background:#C9554F"></div>
<div class="b" style="left:667.00px;top:223.24px;width:134.50px;height:2.00px;background:#819C86"></div>
<div class="b" style="left:953.50px;top:223.24px;width:178.00px;height:2.00px;background:#819C86"></div>
<div class="b" style="left:1131.50px;top:223.24px;width:256.00px;height:2.00px;background:#819C86"></div>
<div class="b" style="left:1387.50px;top:223.24px;width:274.00px;height:2.00px;background:#819C86"></div>
<div class="b" style="left:1661.50px;top:223.24px;width:274.50px;height:2.00px;background:#819C86"></div>
<div class="b" style="left:0.00px;top:270.52px;width:1866.00px;height:1.80px;background:#ABA9AD"></div>
<div class="b" style="left:89.00px;top:270.42px;width:142.50px;height:2.00px;background:#C9554F"></div>
<div class="b" style="left:667.00px;top:270.42px;width:134.50px;height:2.00px;background:#819C86"></div>
<div class="b" style="left:953.50px;top:270.42px;width:178.00px;height:2.00px;background:#819C86"></div>
<div class="b" style="left:1131.50px;top:270.42px;width:256.00px;height:2.00px;background:#819C86"></div>
<div class="b" style="left:1387.50px;top:270.42px;width:274.00px;height:2.00px;background:#819C86"></div>
<div class="b" style="left:1661.50px;top:270.42px;width:274.50px;height:2.00px;background:#819C86"></div>
<div class="b" style="left:0.00px;top:317.70px;width:1866.00px;height:1.80px;background:#ABA9AD"></div>
<div class="b" style="left:89.00px;top:317.60px;width:142.50px;height:2.00px;background:#C9554F"></div>
<div class="b" style="left:667.00px;top:317.60px;width:134.50px;height:2.00px;background:#819C86"></div>
<div class="b" style="left:953.50px;top:317.60px;width:178.00px;height:2.00px;background:#819C86"></div>
<div class="b" style="left:1131.50px;top:317.60px;width:256.00px;height:2.00px;background:#819C86"></div>
<div class="b" style="left:1387.50px;top:317.60px;width:274.00px;height:2.00px;background:#819C86"></div>
<div class="b" style="left:1661.50px;top:317.60px;width:274.50px;height:2.00px;background:#819C86"></div>
<div class="b" style="left:0.00px;top:364.88px;width:1866.00px;height:1.80px;background:#ABA9AD"></div>
<div class="b" style="left:89.00px;top:364.78px;width:142.50px;height:2.00px;background:#C9554F"></div>
<div class="b" style="left:667.00px;top:364.78px;width:134.50px;height:2.00px;background:#819C86"></div>
<div class="b" style="left:953.50px;top:364.78px;width:178.00px;height:2.00px;background:#819C86"></div>
<div class="b" style="left:1131.50px;top:364.78px;width:256.00px;height:2.00px;background:#819C86"></div>
<div class="b" style="left:1387.50px;top:364.78px;width:274.00px;height:2.00px;background:#819C86"></div>
<div class="b" style="left:1661.50px;top:364.78px;width:274.50px;height:2.00px;background:#819C86"></div>
<div class="b" style="left:0.00px;top:412.06px;width:1866.00px;height:1.80px;background:#ABA9AD"></div>
<div class="b" style="left:89.00px;top:411.96px;width:142.50px;height:2.00px;background:#C9554F"></div>
<div class="b" style="left:667.00px;top:411.96px;width:134.50px;height:2.00px;background:#819C86"></div>
<div class="b" style="left:953.50px;top:411.96px;width:178.00px;height:2.00px;background:#819C86"></div>
<div class="b" style="left:1131.50px;top:411.96px;width:256.00px;height:2.00px;background:#819C86"></div>
<div class="b" style="left:1387.50px;top:411.96px;width:274.00px;height:2.00px;background:#819C86"></div>
<div class="b" style="left:1661.50px;top:411.96px;width:274.50px;height:2.00px;background:#819C86"></div>
<div class="b" style="left:0.00px;top:459.24px;width:1866.00px;height:1.80px;background:#ABA9AD"></div>
<div class="b" style="left:89.00px;top:459.14px;width:142.50px;height:2.00px;background:#C9554F"></div>
<div class="b" style="left:667.00px;top:459.14px;width:134.50px;height:2.00px;background:#819C86"></div>
<div class="b" style="left:953.50px;top:459.14px;width:178.00px;height:2.00px;background:#819C86"></div>
<div class="b" style="left:1131.50px;top:459.14px;width:256.00px;height:2.00px;background:#819C86"></div>
<div class="b" style="left:1387.50px;top:459.14px;width:274.00px;height:2.00px;background:#819C86"></div>
<div class="b" style="left:1661.50px;top:459.14px;width:274.50px;height:2.00px;background:#819C86"></div>
<div class="b" style="left:0.00px;top:506.42px;width:1866.00px;height:1.80px;background:#ABA9AD"></div>
<div class="b" style="left:89.00px;top:506.32px;width:142.50px;height:2.00px;background:#C9554F"></div>
<div class="b" style="left:667.00px;top:506.32px;width:134.50px;height:2.00px;background:#819C86"></div>
<div class="b" style="left:953.50px;top:506.32px;width:178.00px;height:2.00px;background:#819C86"></div>
<div class="b" style="left:1131.50px;top:506.32px;width:256.00px;height:2.00px;background:#819C86"></div>
<div class="b" style="left:1387.50px;top:506.32px;width:274.00px;height:2.00px;background:#819C86"></div>
<div class="b" style="left:1661.50px;top:506.32px;width:274.50px;height:2.00px;background:#819C86"></div>
<div class="b" style="left:0.00px;top:553.60px;width:1866.00px;height:1.80px;background:#ABA9AD"></div>
<div class="b" style="left:89.00px;top:553.50px;width:142.50px;height:2.00px;background:#C9554F"></div>
<div class="b" style="left:667.00px;top:553.50px;width:134.50px;height:2.00px;background:#819C86"></div>
<div class="b" style="left:953.50px;top:553.50px;width:178.00px;height:2.00px;background:#819C86"></div>
<div class="b" style="left:1131.50px;top:553.50px;width:256.00px;height:2.00px;background:#819C86"></div>
<div class="b" style="left:1387.50px;top:553.50px;width:274.00px;height:2.00px;background:#819C86"></div>
<div class="b" style="left:1661.50px;top:553.50px;width:274.50px;height:2.00px;background:#819C86"></div>
<div class="b" style="left:0.00px;top:600.78px;width:1866.00px;height:1.80px;background:#ABA9AD"></div>
<div class="b" style="left:89.00px;top:600.68px;width:142.50px;height:2.00px;background:#C9554F"></div>
<div class="b" style="left:667.00px;top:600.68px;width:134.50px;height:2.00px;background:#819C86"></div>
<div class="b" style="left:953.50px;top:600.68px;width:178.00px;height:2.00px;background:#819C86"></div>
<div class="b" style="left:1131.50px;top:600.68px;width:256.00px;height:2.00px;background:#819C86"></div>
<div class="b" style="left:1387.50px;top:600.68px;width:274.00px;height:2.00px;background:#819C86"></div>
<div class="b" style="left:1661.50px;top:600.68px;width:274.50px;height:2.00px;background:#819C86"></div>
<div class="b" style="left:0.00px;top:647.96px;width:1866.00px;height:1.80px;background:#ABA9AD"></div>
<div class="b" style="left:89.00px;top:647.86px;width:142.50px;height:2.00px;background:#C9554F"></div>
<div class="b" style="left:667.00px;top:647.86px;width:134.50px;height:2.00px;background:#819C86"></div>
<div class="b" style="left:953.50px;top:647.86px;width:178.00px;height:2.00px;background:#819C86"></div>
<div class="b" style="left:1131.50px;top:647.86px;width:256.00px;height:2.00px;background:#819C86"></div>
<div class="b" style="left:1387.50px;top:647.86px;width:274.00px;height:2.00px;background:#819C86"></div>
<div class="b" style="left:1661.50px;top:647.86px;width:274.50px;height:2.00px;background:#819C86"></div>
<div class="b" style="left:0.00px;top:695.14px;width:1866.00px;height:1.80px;background:#ABA9AD"></div>
<div class="b" style="left:89.00px;top:695.04px;width:142.50px;height:2.00px;background:#C9554F"></div>
<div class="b" style="left:667.00px;top:695.04px;width:134.50px;height:2.00px;background:#819C86"></div>
<div class="b" style="left:953.50px;top:695.04px;width:178.00px;height:2.00px;background:#819C86"></div>
<div class="b" style="left:1131.50px;top:695.04px;width:256.00px;height:2.00px;background:#819C86"></div>
<div class="b" style="left:1387.50px;top:695.04px;width:274.00px;height:2.00px;background:#819C86"></div>
<div class="b" style="left:1661.50px;top:695.04px;width:274.50px;height:2.00px;background:#819C86"></div>
<div class="b" style="left:0.00px;top:742.32px;width:1866.00px;height:1.80px;background:#ABA9AD"></div>
<div class="b" style="left:89.00px;top:742.22px;width:142.50px;height:2.00px;background:#C9554F"></div>
<div class="b" style="left:667.00px;top:742.22px;width:134.50px;height:2.00px;background:#819C86"></div>
<div class="b" style="left:953.50px;top:742.22px;width:178.00px;height:2.00px;background:#819C86"></div>
<div class="b" style="left:1131.50px;top:742.22px;width:256.00px;height:2.00px;background:#819C86"></div>
<div class="b" style="left:1387.50px;top:742.22px;width:274.00px;height:2.00px;background:#819C86"></div>
<div class="b" style="left:1661.50px;top:742.22px;width:274.50px;height:2.00px;background:#819C86"></div>
<div class="b" style="left:0.00px;top:789.50px;width:1866.00px;height:1.80px;background:#ABA9AD"></div>
<div class="b" style="left:89.00px;top:789.40px;width:142.50px;height:2.00px;background:#C9554F"></div>
<div class="b" style="left:667.00px;top:789.40px;width:134.50px;height:2.00px;background:#819C86"></div>
<div class="b" style="left:953.50px;top:789.40px;width:178.00px;height:2.00px;background:#819C86"></div>
<div class="b" style="left:1131.50px;top:789.40px;width:256.00px;height:2.00px;background:#819C86"></div>
<div class="b" style="left:1387.50px;top:789.40px;width:274.00px;height:2.00px;background:#819C86"></div>
<div class="b" style="left:1661.50px;top:789.40px;width:274.50px;height:2.00px;background:#819C86"></div>
<div class="b" style="left:0.00px;top:836.68px;width:1866.00px;height:1.80px;background:#ABA9AD"></div>
<div class="b" style="left:89.00px;top:836.58px;width:142.50px;height:2.00px;background:#C9554F"></div>
<div class="b" style="left:667.00px;top:836.58px;width:134.50px;height:2.00px;background:#819C86"></div>
<div class="b" style="left:953.50px;top:836.58px;width:178.00px;height:2.00px;background:#819C86"></div>
<div class="b" style="left:1131.50px;top:836.58px;width:256.00px;height:2.00px;background:#819C86"></div>
<div class="b" style="left:1387.50px;top:836.58px;width:274.00px;height:2.00px;background:#819C86"></div>
<div class="b" style="left:1661.50px;top:836.58px;width:274.50px;height:2.00px;background:#819C86"></div>
<div class="b" style="left:0.00px;top:883.86px;width:1866.00px;height:1.80px;background:#ABA9AD"></div>
<div class="b" style="left:89.00px;top:883.76px;width:142.50px;height:2.00px;background:#C9554F"></div>
<div class="b" style="left:667.00px;top:883.76px;width:134.50px;height:2.00px;background:#819C86"></div>
<div class="b" style="left:953.50px;top:883.76px;width:178.00px;height:2.00px;background:#819C86"></div>
<div class="b" style="left:1131.50px;top:883.76px;width:256.00px;height:2.00px;background:#819C86"></div>
<div class="b" style="left:1387.50px;top:883.76px;width:274.00px;height:2.00px;background:#819C86"></div>
<div class="b" style="left:1661.50px;top:883.76px;width:274.50px;height:2.00px;background:#819C86"></div>
<div class="b" style="left:88.20px;top:0.00px;width:1.60px;height:886.00px;background:#7F7F82"></div>
<div class="b" style="left:230.70px;top:0.00px;width:1.60px;height:886.00px;background:#7F7F82"></div>
<div class="b" style="left:364.70px;top:0.00px;width:1.60px;height:886.00px;background:#7F7F82"></div>
<div class="b" style="left:568.20px;top:0.00px;width:1.60px;height:886.00px;background:#7F7F82"></div>
<div class="b" style="left:666.20px;top:0.00px;width:1.60px;height:886.00px;background:#7F7F82"></div>
<div class="b" style="left:800.70px;top:0.00px;width:1.60px;height:886.00px;background:#7F7F82"></div>
<div class="b" style="left:952.70px;top:0.00px;width:1.60px;height:886.00px;background:#7F7F82"></div>
<div class="b" style="left:1130.70px;top:0.00px;width:1.60px;height:886.00px;background:#7F7F82"></div>
<div class="b" style="left:1386.70px;top:0.00px;width:1.60px;height:886.00px;background:#7F7F82"></div>
<div class="b" style="left:1660.70px;top:0.00px;width:1.60px;height:886.00px;background:#7F7F82"></div>
<svg style="left:359.50px;top:36.00px" width="6" height="6" viewBox="0 0 6 6"><path d="M0 0 H6 V6Z" fill="#B0101A"/></svg>
<svg style="left:563.00px;top:36.00px" width="6" height="6" viewBox="0 0 6 6"><path d="M0 0 H6 V6Z" fill="#B0101A"/></svg>
<svg style="left:661.00px;top:36.00px" width="6" height="6" viewBox="0 0 6 6"><path d="M0 0 H6 V6Z" fill="#B0101A"/></svg>
<svg style="left:795.50px;top:36.00px" width="6" height="6" viewBox="0 0 6 6"><path d="M0 0 H6 V6Z" fill="#B0101A"/></svg>
<svg style="left:947.50px;top:36.00px" width="6" height="6" viewBox="0 0 6 6"><path d="M0 0 H6 V6Z" fill="#B0101A"/></svg>
<svg style="left:1125.50px;top:36.00px" width="6" height="6" viewBox="0 0 6 6"><path d="M0 0 H6 V6Z" fill="#B0101A"/></svg>
<svg style="left:1381.50px;top:36.00px" width="6" height="6" viewBox="0 0 6 6"><path d="M0 0 H6 V6Z" fill="#B0101A"/></svg>
<svg style="left:1655.50px;top:36.00px" width="6" height="6" viewBox="0 0 6 6"><path d="M0 0 H6 V6Z" fill="#B0101A"/></svg>
<svg style="left:1930.00px;top:36.00px" width="6" height="6" viewBox="0 0 6 6"><path d="M0 0 H6 V6Z" fill="#B0101A"/></svg>
<svg style="left:225.50px;top:82.70px" width="6" height="6" viewBox="0 0 6 6"><path d="M0 0 H6 V6Z" fill="#B0101A"/></svg>
<svg style="left:795.50px;top:82.70px" width="6" height="6" viewBox="0 0 6 6"><path d="M0 0 H6 V6Z" fill="#B0101A"/></svg>
<svg style="left:1125.50px;top:82.70px" width="6" height="6" viewBox="0 0 6 6"><path d="M0 0 H6 V6Z" fill="#B0101A"/></svg>
<svg style="left:1381.50px;top:82.70px" width="6" height="6" viewBox="0 0 6 6"><path d="M0 0 H6 V6Z" fill="#B0101A"/></svg>
<svg style="left:1655.50px;top:82.70px" width="6" height="6" viewBox="0 0 6 6"><path d="M0 0 H6 V6Z" fill="#B0101A"/></svg>
<svg style="left:1930.00px;top:82.70px" width="6" height="6" viewBox="0 0 6 6"><path d="M0 0 H6 V6Z" fill="#B0101A"/></svg>
<svg style="left:225.50px;top:129.88px" width="6" height="6" viewBox="0 0 6 6"><path d="M0 0 H6 V6Z" fill="#B0101A"/></svg>
<svg style="left:795.50px;top:129.88px" width="6" height="6" viewBox="0 0 6 6"><path d="M0 0 H6 V6Z" fill="#B0101A"/></svg>
<svg style="left:1125.50px;top:129.88px" width="6" height="6" viewBox="0 0 6 6"><path d="M0 0 H6 V6Z" fill="#B0101A"/></svg>
<svg style="left:1381.50px;top:129.88px" width="6" height="6" viewBox="0 0 6 6"><path d="M0 0 H6 V6Z" fill="#B0101A"/></svg>
<svg style="left:1655.50px;top:129.88px" width="6" height="6" viewBox="0 0 6 6"><path d="M0 0 H6 V6Z" fill="#B0101A"/></svg>
<svg style="left:1930.00px;top:129.88px" width="6" height="6" viewBox="0 0 6 6"><path d="M0 0 H6 V6Z" fill="#B0101A"/></svg>
<svg style="left:225.50px;top:177.06px" width="6" height="6" viewBox="0 0 6 6"><path d="M0 0 H6 V6Z" fill="#B0101A"/></svg>
<svg style="left:795.50px;top:177.06px" width="6" height="6" viewBox="0 0 6 6"><path d="M0 0 H6 V6Z" fill="#B0101A"/></svg>
<svg style="left:1125.50px;top:177.06px" width="6" height="6" viewBox="0 0 6 6"><path d="M0 0 H6 V6Z" fill="#B0101A"/></svg>
<svg style="left:1381.50px;top:177.06px" width="6" height="6" viewBox="0 0 6 6"><path d="M0 0 H6 V6Z" fill="#B0101A"/></svg>
<svg style="left:1655.50px;top:177.06px" width="6" height="6" viewBox="0 0 6 6"><path d="M0 0 H6 V6Z" fill="#B0101A"/></svg>
<svg style="left:1930.00px;top:177.06px" width="6" height="6" viewBox="0 0 6 6"><path d="M0 0 H6 V6Z" fill="#B0101A"/></svg>
<svg style="left:225.50px;top:224.24px" width="6" height="6" viewBox="0 0 6 6"><path d="M0 0 H6 V6Z" fill="#B0101A"/></svg>
<svg style="left:795.50px;top:224.24px" width="6" height="6" viewBox="0 0 6 6"><path d="M0 0 H6 V6Z" fill="#B0101A"/></svg>
<svg style="left:1125.50px;top:224.24px" width="6" height="6" viewBox="0 0 6 6"><path d="M0 0 H6 V6Z" fill="#B0101A"/></svg>
<svg style="left:1381.50px;top:224.24px" width="6" height="6" viewBox="0 0 6 6"><path d="M0 0 H6 V6Z" fill="#B0101A"/></svg>
<svg style="left:1655.50px;top:224.24px" width="6" height="6" viewBox="0 0 6 6"><path d="M0 0 H6 V6Z" fill="#B0101A"/></svg>
<svg style="left:1930.00px;top:224.24px" width="6" height="6" viewBox="0 0 6 6"><path d="M0 0 H6 V6Z" fill="#B0101A"/></svg>
<svg style="left:225.50px;top:271.42px" width="6" height="6" viewBox="0 0 6 6"><path d="M0 0 H6 V6Z" fill="#B0101A"/></svg>
<svg style="left:795.50px;top:271.42px" width="6" height="6" viewBox="0 0 6 6"><path d="M0 0 H6 V6Z" fill="#B0101A"/></svg>
<svg style="left:1125.50px;top:271.42px" width="6" height="6" viewBox="0 0 6 6"><path d="M0 0 H6 V6Z" fill="#B0101A"/></svg>
<svg style="left:1381.50px;top:271.42px" width="6" height="6" viewBox="0 0 6 6"><path d="M0 0 H6 V6Z" fill="#B0101A"/></svg>
<svg style="left:1655.50px;top:271.42px" width="6" height="6" viewBox="0 0 6 6"><path d="M0 0 H6 V6Z" fill="#B0101A"/></svg>
<svg style="left:1930.00px;top:271.42px" width="6" height="6" viewBox="0 0 6 6"><path d="M0 0 H6 V6Z" fill="#B0101A"/></svg>
<svg style="left:225.50px;top:318.60px" width="6" height="6" viewBox="0 0 6 6"><path d="M0 0 H6 V6Z" fill="#B0101A"/></svg>
<svg style="left:795.50px;top:318.60px" width="6" height="6" viewBox="0 0 6 6"><path d="M0 0 H6 V6Z" fill="#B0101A"/></svg>
<svg style="left:1125.50px;top:318.60px" width="6" height="6" viewBox="0 0 6 6"><path d="M0 0 H6 V6Z" fill="#B0101A"/></svg>
<svg style="left:1381.50px;top:318.60px" width="6" height="6" viewBox="0 0 6 6"><path d="M0 0 H6 V6Z" fill="#B0101A"/></svg>
<svg style="left:1655.50px;top:318.60px" width="6" height="6" viewBox="0 0 6 6"><path d="M0 0 H6 V6Z" fill="#B0101A"/></svg>
<svg style="left:1930.00px;top:318.60px" width="6" height="6" viewBox="0 0 6 6"><path d="M0 0 H6 V6Z" fill="#B0101A"/></svg>
<svg style="left:225.50px;top:365.78px" width="6" height="6" viewBox="0 0 6 6"><path d="M0 0 H6 V6Z" fill="#B0101A"/></svg>
<svg style="left:795.50px;top:365.78px" width="6" height="6" viewBox="0 0 6 6"><path d="M0 0 H6 V6Z" fill="#B0101A"/></svg>
<svg style="left:1125.50px;top:365.78px" width="6" height="6" viewBox="0 0 6 6"><path d="M0 0 H6 V6Z" fill="#B0101A"/></svg>
<svg style="left:1381.50px;top:365.78px" width="6" height="6" viewBox="0 0 6 6"><path d="M0 0 H6 V6Z" fill="#B0101A"/></svg>
<svg style="left:1655.50px;top:365.78px" width="6" height="6" viewBox="0 0 6 6"><path d="M0 0 H6 V6Z" fill="#B0101A"/></svg>
<svg style="left:1930.00px;top:365.78px" width="6" height="6" viewBox="0 0 6 6"><path d="M0 0 H6 V6Z" fill="#B0101A"/></svg>
<svg style="left:225.50px;top:412.96px" width="6" height="6" viewBox="0 0 6 6"><path d="M0 0 H6 V6Z" fill="#B0101A"/></svg>
<svg style="left:795.50px;top:412.96px" width="6" height="6" viewBox="0 0 6 6"><path d="M0 0 H6 V6Z" fill="#B0101A"/></svg>
<svg style="left:1125.50px;top:412.96px" width="6" height="6" viewBox="0 0 6 6"><path d="M0 0 H6 V6Z" fill="#B0101A"/></svg>
<svg style="left:1381.50px;top:412.96px" width="6" height="6" viewBox="0 0 6 6"><path d="M0 0 H6 V6Z" fill="#B0101A"/></svg>
<svg style="left:1655.50px;top:412.96px" width="6" height="6" viewBox="0 0 6 6"><path d="M0 0 H6 V6Z" fill="#B0101A"/></svg>
<svg style="left:1930.00px;top:412.96px" width="6" height="6" viewBox="0 0 6 6"><path d="M0 0 H6 V6Z" fill="#B0101A"/></svg>
<svg style="left:225.50px;top:460.14px" width="6" height="6" viewBox="0 0 6 6"><path d="M0 0 H6 V6Z" fill="#B0101A"/></svg>
<svg style="left:795.50px;top:460.14px" width="6" height="6" viewBox="0 0 6 6"><path d="M0 0 H6 V6Z" fill="#B0101A"/></svg>
<svg style="left:1125.50px;top:460.14px" width="6" height="6" viewBox="0 0 6 6"><path d="M0 0 H6 V6Z" fill="#B0101A"/></svg>
<svg style="left:1381.50px;top:460.14px" width="6" height="6" viewBox="0 0 6 6"><path d="M0 0 H6 V6Z" fill="#B0101A"/></svg>
<svg style="left:1655.50px;top:460.14px" width="6" height="6" viewBox="0 0 6 6"><path d="M0 0 H6 V6Z" fill="#B0101A"/></svg>
<svg style="left:1930.00px;top:460.14px" width="6" height="6" viewBox="0 0 6 6"><path d="M0 0 H6 V6Z" fill="#B0101A"/></svg>
<svg style="left:225.50px;top:507.32px" width="6" height="6" viewBox="0 0 6 6"><path d="M0 0 H6 V6Z" fill="#B0101A"/></svg>
<svg style="left:795.50px;top:507.32px" width="6" height="6" viewBox="0 0 6 6"><path d="M0 0 H6 V6Z" fill="#B0101A"/></svg>
<svg style="left:1125.50px;top:507.32px" width="6" height="6" viewBox="0 0 6 6"><path d="M0 0 H6 V6Z" fill="#B0101A"/></svg>
<svg style="left:1381.50px;top:507.32px" width="6" height="6" viewBox="0 0 6 6"><path d="M0 0 H6 V6Z" fill="#B0101A"/></svg>
<svg style="left:1655.50px;top:507.32px" width="6" height="6" viewBox="0 0 6 6"><path d="M0 0 H6 V6Z" fill="#B0101A"/></svg>
<svg style="left:1930.00px;top:507.32px" width="6" height="6" viewBox="0 0 6 6"><path d="M0 0 H6 V6Z" fill="#B0101A"/></svg>
<svg style="left:225.50px;top:554.50px" width="6" height="6" viewBox="0 0 6 6"><path d="M0 0 H6 V6Z" fill="#B0101A"/></svg>
<svg style="left:795.50px;top:554.50px" width="6" height="6" viewBox="0 0 6 6"><path d="M0 0 H6 V6Z" fill="#B0101A"/></svg>
<svg style="left:1125.50px;top:554.50px" width="6" height="6" viewBox="0 0 6 6"><path d="M0 0 H6 V6Z" fill="#B0101A"/></svg>
<svg style="left:1381.50px;top:554.50px" width="6" height="6" viewBox="0 0 6 6"><path d="M0 0 H6 V6Z" fill="#B0101A"/></svg>
<svg style="left:1655.50px;top:554.50px" width="6" height="6" viewBox="0 0 6 6"><path d="M0 0 H6 V6Z" fill="#B0101A"/></svg>
<svg style="left:1930.00px;top:554.50px" width="6" height="6" viewBox="0 0 6 6"><path d="M0 0 H6 V6Z" fill="#B0101A"/></svg>
<svg style="left:225.50px;top:601.68px" width="6" height="6" viewBox="0 0 6 6"><path d="M0 0 H6 V6Z" fill="#B0101A"/></svg>
<svg style="left:795.50px;top:601.68px" width="6" height="6" viewBox="0 0 6 6"><path d="M0 0 H6 V6Z" fill="#B0101A"/></svg>
<svg style="left:1125.50px;top:601.68px" width="6" height="6" viewBox="0 0 6 6"><path d="M0 0 H6 V6Z" fill="#B0101A"/></svg>
<svg style="left:1381.50px;top:601.68px" width="6" height="6" viewBox="0 0 6 6"><path d="M0 0 H6 V6Z" fill="#B0101A"/></svg>
<svg style="left:1655.50px;top:601.68px" width="6" height="6" viewBox="0 0 6 6"><path d="M0 0 H6 V6Z" fill="#B0101A"/></svg>
<svg style="left:1930.00px;top:601.68px" width="6" height="6" viewBox="0 0 6 6"><path d="M0 0 H6 V6Z" fill="#B0101A"/></svg>
<svg style="left:225.50px;top:648.86px" width="6" height="6" viewBox="0 0 6 6"><path d="M0 0 H6 V6Z" fill="#B0101A"/></svg>
<svg style="left:795.50px;top:648.86px" width="6" height="6" viewBox="0 0 6 6"><path d="M0 0 H6 V6Z" fill="#B0101A"/></svg>
<svg style="left:1125.50px;top:648.86px" width="6" height="6" viewBox="0 0 6 6"><path d="M0 0 H6 V6Z" fill="#B0101A"/></svg>
<svg style="left:1381.50px;top:648.86px" width="6" height="6" viewBox="0 0 6 6"><path d="M0 0 H6 V6Z" fill="#B0101A"/></svg>
<svg style="left:1655.50px;top:648.86px" width="6" height="6" viewBox="0 0 6 6"><path d="M0 0 H6 V6Z" fill="#B0101A"/></svg>
<svg style="left:1930.00px;top:648.86px" width="6" height="6" viewBox="0 0 6 6"><path d="M0 0 H6 V6Z" fill="#B0101A"/></svg>
<svg style="left:225.50px;top:696.04px" width="6" height="6" viewBox="0 0 6 6"><path d="M0 0 H6 V6Z" fill="#B0101A"/></svg>
<svg style="left:795.50px;top:696.04px" width="6" height="6" viewBox="0 0 6 6"><path d="M0 0 H6 V6Z" fill="#B0101A"/></svg>
<svg style="left:1125.50px;top:696.04px" width="6" height="6" viewBox="0 0 6 6"><path d="M0 0 H6 V6Z" fill="#B0101A"/></svg>
<svg style="left:1381.50px;top:696.04px" width="6" height="6" viewBox="0 0 6 6"><path d="M0 0 H6 V6Z" fill="#B0101A"/></svg>
<svg style="left:1655.50px;top:696.04px" width="6" height="6" viewBox="0 0 6 6"><path d="M0 0 H6 V6Z" fill="#B0101A"/></svg>
<svg style="left:1930.00px;top:696.04px" width="6" height="6" viewBox="0 0 6 6"><path d="M0 0 H6 V6Z" fill="#B0101A"/></svg>
<svg style="left:225.50px;top:743.22px" width="6" height="6" viewBox="0 0 6 6"><path d="M0 0 H6 V6Z" fill="#B0101A"/></svg>
<svg style="left:795.50px;top:743.22px" width="6" height="6" viewBox="0 0 6 6"><path d="M0 0 H6 V6Z" fill="#B0101A"/></svg>
<svg style="left:1125.50px;top:743.22px" width="6" height="6" viewBox="0 0 6 6"><path d="M0 0 H6 V6Z" fill="#B0101A"/></svg>
<svg style="left:1381.50px;top:743.22px" width="6" height="6" viewBox="0 0 6 6"><path d="M0 0 H6 V6Z" fill="#B0101A"/></svg>
<svg style="left:1655.50px;top:743.22px" width="6" height="6" viewBox="0 0 6 6"><path d="M0 0 H6 V6Z" fill="#B0101A"/></svg>
<svg style="left:1930.00px;top:743.22px" width="6" height="6" viewBox="0 0 6 6"><path d="M0 0 H6 V6Z" fill="#B0101A"/></svg>
<svg style="left:225.50px;top:790.40px" width="6" height="6" viewBox="0 0 6 6"><path d="M0 0 H6 V6Z" fill="#B0101A"/></svg>
<svg style="left:795.50px;top:790.40px" width="6" height="6" viewBox="0 0 6 6"><path d="M0 0 H6 V6Z" fill="#B0101A"/></svg>
<svg style="left:1125.50px;top:790.40px" width="6" height="6" viewBox="0 0 6 6"><path d="M0 0 H6 V6Z" fill="#B0101A"/></svg>
<svg style="left:1381.50px;top:790.40px" width="6" height="6" viewBox="0 0 6 6"><path d="M0 0 H6 V6Z" fill="#B0101A"/></svg>
<svg style="left:1655.50px;top:790.40px" width="6" height="6" viewBox="0 0 6 6"><path d="M0 0 H6 V6Z" fill="#B0101A"/></svg>
<svg style="left:1930.00px;top:790.40px" width="6" height="6" viewBox="0 0 6 6"><path d="M0 0 H6 V6Z" fill="#B0101A"/></svg>
<svg style="left:225.50px;top:837.58px" width="6" height="6" viewBox="0 0 6 6"><path d="M0 0 H6 V6Z" fill="#B0101A"/></svg>
<svg style="left:795.50px;top:837.58px" width="6" height="6" viewBox="0 0 6 6"><path d="M0 0 H6 V6Z" fill="#B0101A"/></svg>
<svg style="left:1125.50px;top:837.58px" width="6" height="6" viewBox="0 0 6 6"><path d="M0 0 H6 V6Z" fill="#B0101A"/></svg>
<svg style="left:1381.50px;top:837.58px" width="6" height="6" viewBox="0 0 6 6"><path d="M0 0 H6 V6Z" fill="#B0101A"/></svg>
<svg style="left:1655.50px;top:837.58px" width="6" height="6" viewBox="0 0 6 6"><path d="M0 0 H6 V6Z" fill="#B0101A"/></svg>
<svg style="left:1930.00px;top:837.58px" width="6" height="6" viewBox="0 0 6 6"><path d="M0 0 H6 V6Z" fill="#B0101A"/></svg>
<div class="t" style="left:89.00px;top:1.00px;width:142.50px;height:40px;line-height:40px;font-size:24.5px;color:#333;font-weight:400;text-align:center;overflow:hidden;">1</div>
<div class="t" style="left:231.50px;top:1.00px;width:134.00px;height:40px;line-height:40px;font-size:24.5px;color:#222;font-weight:700;text-align:center;overflow:hidden;">2</div>
<div class="t" style="left:365.50px;top:1.00px;width:203.50px;height:40px;line-height:40px;font-size:24.5px;color:#333;font-weight:400;text-align:center;overflow:hidden;">3</div>
<div class="t" style="left:569.00px;top:1.00px;width:98.00px;height:40px;line-height:40px;font-size:24.5px;color:#333;font-weight:400;text-align:center;overflow:hidden;">4</div>
<div class="t" style="left:667.00px;top:1.00px;width:134.50px;height:40px;line-height:40px;font-size:24.5px;color:#333;font-weight:400;text-align:center;overflow:hidden;">5</div>
<div class="t" style="left:801.50px;top:1.00px;width:152.00px;height:40px;line-height:40px;font-size:24.5px;color:#333;font-weight:400;text-align:center;overflow:hidden;">6</div>
<div class="t" style="left:953.50px;top:1.00px;width:178.00px;height:40px;line-height:40px;font-size:24.5px;color:#333;font-weight:400;text-align:center;overflow:hidden;">7</div>
<div class="t" style="left:1131.50px;top:1.00px;width:256.00px;height:40px;line-height:40px;font-size:24.5px;color:#333;font-weight:400;text-align:center;overflow:hidden;">8</div>
<div class="t" style="left:1387.50px;top:1.00px;width:274.00px;height:40px;line-height:40px;font-size:24.5px;color:#333;font-weight:400;text-align:center;overflow:hidden;">9</div>
<div class="t" style="left:1675.50px;top:1.00px;width:176.50px;height:40px;line-height:40px;font-size:24.5px;color:#333;font-weight:400;text-align:right;overflow:hidden;">10</div>
<div class="t" style="left:0.00px;top:39.85px;width:89.00px;height:40px;line-height:40px;font-size:24.5px;color:#444444;font-weight:400;text-align:center;overflow:hidden;">1</div>
<div class="t" style="left:0.00px;top:86.79px;width:89.00px;height:40px;line-height:40px;font-size:24.5px;color:#444444;font-weight:400;text-align:center;overflow:hidden;">2</div>
<div class="t" style="left:0.00px;top:133.97px;width:89.00px;height:40px;line-height:40px;font-size:24.5px;color:#444444;font-weight:400;text-align:center;overflow:hidden;">3</div>
<div class="t" style="left:0.00px;top:181.15px;width:89.00px;height:40px;line-height:40px;font-size:24.5px;color:#444444;font-weight:700;text-align:center;overflow:hidden;">4</div>
<div class="t" style="left:0.00px;top:228.33px;width:89.00px;height:40px;line-height:40px;font-size:24.5px;color:#444444;font-weight:400;text-align:center;overflow:hidden;">5</div>
<div class="t" style="left:0.00px;top:275.51px;width:89.00px;height:40px;line-height:40px;font-size:24.5px;color:#444444;font-weight:400;text-align:center;overflow:hidden;">6</div>
<div class="t" style="left:0.00px;top:322.69px;width:89.00px;height:40px;line-height:40px;font-size:24.5px;color:#444444;font-weight:400;text-align:center;overflow:hidden;">7</div>
<div class="t" style="left:0.00px;top:369.87px;width:89.00px;height:40px;line-height:40px;font-size:24.5px;color:#444444;font-weight:400;text-align:center;overflow:hidden;">8</div>
<div class="t" style="left:0.00px;top:417.05px;width:89.00px;height:40px;line-height:40px;font-size:24.5px;color:#444444;font-weight:400;text-align:center;overflow:hidden;">9</div>
<div class="t" style="left:0.00px;top:464.23px;width:89.00px;height:40px;line-height:40px;font-size:24.5px;color:#444444;font-weight:400;text-align:center;overflow:hidden;">10</div>
<div class="t" style="left:0.00px;top:511.41px;width:89.00px;height:40px;line-height:40px;font-size:24.5px;color:#444444;font-weight:400;text-align:center;overflow:hidden;">11</div>
<div class="t" style="left:0.00px;top:558.59px;width:89.00px;height:40px;line-height:40px;font-size:24.5px;color:#444444;font-weight:400;text-align:center;overflow:hidden;">12</div>
<div class="t" style="left:0.00px;top:605.77px;width:89.00px;height:40px;line-height:40px;font-size:24.5px;color:#444444;font-weight:400;text-align:center;overflow:hidden;">13</div>
<div class="t" style="left:0.00px;top:652.95px;width:89.00px;height:40px;line-height:40px;font-size:24.5px;color:#444444;font-weight:400;text-align:center;overflow:hidden;">14</div>
<div class="t" style="left:0.00px;top:700.13px;width:89.00px;height:40px;line-height:40px;font-size:24.5px;color:#444444;font-weight:400;text-align:center;overflow:hidden;">15</div>
<div class="t" style="left:0.00px;top:747.31px;width:89.00px;height:40px;line-height:40px;font-size:24.5px;color:#444444;font-weight:400;text-align:center;overflow:hidden;">16</div>
<div class="t" style="left:0.00px;top:794.49px;width:89.00px;height:40px;line-height:40px;font-size:24.5px;color:#444444;font-weight:400;text-align:center;overflow:hidden;">17</div>
<div class="t" style="left:0.00px;top:841.67px;width:89.00px;height:40px;line-height:40px;font-size:24.5px;color:#444444;font-weight:400;text-align:center;overflow:hidden;">18</div>
<div class="b" style="left:89.75px;top:39.85px;width:141.00px;height:40px;overflow:hidden"><div class="t" style="left:-129.50px;top:0;width:400px;height:40px;line-height:40px;font-size:33px;color:#141414;text-align:center">Артикул</div></div>
<div class="b" style="left:232.25px;top:39.85px;width:132.50px;height:40px;overflow:hidden"><div class="t" style="left:-133.75px;top:0;width:400px;height:40px;line-height:40px;font-size:33px;color:#fff;text-align:center">размер</div></div>
<div class="b" style="left:366.25px;top:39.85px;width:202.00px;height:40px;overflow:hidden"><div class="t" style="left:-99.00px;top:0;width:400px;height:40px;line-height:40px;font-size:33px;color:#141414;text-align:center">Количество</div></div>
<div class="b" style="left:569.75px;top:39.85px;width:96.50px;height:40px;overflow:hidden"><div class="t" style="left:-151.75px;top:0;width:400px;height:40px;line-height:40px;font-size:33px;color:#141414;text-align:center">Цена</div></div>
<div class="b" style="left:667.75px;top:39.85px;width:133.00px;height:40px;overflow:hidden"><div class="t" style="left:-138.50px;top:0;width:400px;height:40px;line-height:40px;font-size:33px;color:#141414;text-align:center">Наименование</div></div>
<div class="b" style="left:802.25px;top:39.85px;width:150.50px;height:40px;overflow:hidden"><div class="t" style="left:-124.75px;top:0;width:400px;height:40px;line-height:40px;font-size:33px;color:#fff;text-align:center">вид</div></div>
<div class="b" style="left:954.25px;top:39.85px;width:176.50px;height:40px;overflow:hidden"><div class="t" style="left:-111.75px;top:0;width:400px;height:40px;line-height:40px;font-size:33px;color:#141414;text-align:center">цвет</div></div>
<div class="b" style="left:1132.25px;top:39.85px;width:254.50px;height:40px;overflow:hidden"><div class="t" style="left:-72.75px;top:0;width:400px;height:40px;line-height:40px;font-size:33px;color:#141414;text-align:center">Сезон</div></div>
<div class="b" style="left:1388.25px;top:39.85px;width:272.50px;height:40px;overflow:hidden"><div class="t" style="left:-63.75px;top:0;width:400px;height:40px;line-height:40px;font-size:33px;color:#141414;text-align:center">МатериалВерха</div></div>
<div class="t" style="left:1673px;top:39.85px;height:40px;line-height:40px;font-size:33px;color:#141414">МатериалПодошвы</div>
<div class="t" style="left:89.00px;top:86.79px;width:142.50px;height:40px;line-height:40px;font-size:25.6px;color:#FFF4F2;font-weight:400;text-align:center;overflow:hidden;">R13589</div>
<div class="t" style="left:231.50px;top:86.79px;width:134.00px;height:40px;line-height:40px;font-size:31.8px;color:#1A1A1A;font-weight:400;text-align:center;overflow:hidden;">36</div>
<div class="t" style="left:365.50px;top:86.79px;width:203.50px;height:40px;line-height:40px;font-size:25.5px;color:#1A1A1A;font-weight:400;text-align:center;overflow:hidden;">1</div>
<div class="t" style="left:569.00px;top:86.79px;width:98.00px;height:40px;line-height:40px;font-size:25.6px;color:#1A1A1A;font-weight:400;text-align:center;overflow:hidden;">2990</div>
<div class="t" style="left:667.00px;top:86.79px;width:134.50px;height:40px;line-height:40px;font-size:25.7px;color:#1A1A1A;font-weight:400;text-align:center;overflow:hidden;">Женский</div>
<div class="t" style="left:801.50px;top:86.79px;width:152.00px;height:40px;line-height:40px;font-size:24.8px;color:#1A1A1A;font-weight:400;text-align:center;overflow:hidden;">Туфли</div>
<div class="t" style="left:953.50px;top:86.79px;width:178.00px;height:40px;line-height:40px;font-size:25.4px;color:#1A1A1A;font-weight:400;text-align:center;overflow:hidden;">бежевый</div>
<div class="t" style="left:1131.50px;top:86.79px;width:256.00px;height:40px;line-height:40px;font-size:25.5px;color:#1A1A1A;font-weight:400;text-align:center;overflow:hidden;">летний</div>
<div class="t" style="left:1387.50px;top:86.79px;width:274.00px;height:40px;line-height:40px;font-size:25.3px;color:#1A1A1A;font-weight:400;text-align:center;overflow:hidden;">натуральная кожа</div>
<div class="t" style="left:1731px;top:86.79px;height:40px;line-height:40px;font-size:25.3px;color:#1A1A1A">натуральная кожа</div>
<div class="t" style="left:89.00px;top:133.97px;width:142.50px;height:40px;line-height:40px;font-size:25.6px;color:#FFF4F2;font-weight:400;text-align:center;overflow:hidden;">R13589</div>
<div class="t" style="left:231.50px;top:133.97px;width:134.00px;height:40px;line-height:40px;font-size:31.8px;color:#1A1A1A;font-weight:400;text-align:center;overflow:hidden;">37</div>
<div class="t" style="left:365.50px;top:133.97px;width:203.50px;height:40px;line-height:40px;font-size:25.5px;color:#1A1A1A;font-weight:400;text-align:center;overflow:hidden;">1</div>
<div class="t" style="left:569.00px;top:133.97px;width:98.00px;height:40px;line-height:40px;font-size:25.6px;color:#1A1A1A;font-weight:400;text-align:center;overflow:hidden;">2990</div>
<div class="t" style="left:667.00px;top:133.97px;width:134.50px;height:40px;line-height:40px;font-size:25.7px;color:#1A1A1A;font-weight:400;text-align:center;overflow:hidden;">Женский</div>
<div class="t" style="left:801.50px;top:133.97px;width:152.00px;height:40px;line-height:40px;font-size:24.8px;color:#1A1A1A;font-weight:400;text-align:center;overflow:hidden;">Туфли</div>
<div class="t" style="left:953.50px;top:133.97px;width:178.00px;height:40px;line-height:40px;font-size:25.4px;color:#1A1A1A;font-weight:400;text-align:center;overflow:hidden;">бежевый</div>
<div class="t" style="left:1131.50px;top:133.97px;width:256.00px;height:40px;line-height:40px;font-size:25.5px;color:#1A1A1A;font-weight:400;text-align:center;overflow:hidden;">летний</div>
<div class="t" style="left:1387.50px;top:133.97px;width:274.00px;height:40px;line-height:40px;font-size:25.3px;color:#1A1A1A;font-weight:400;text-align:center;overflow:hidden;">натуральная кожа</div>
<div class="t" style="left:1731px;top:133.97px;height:40px;line-height:40px;font-size:25.3px;color:#1A1A1A">натуральная кожа</div>
<div class="t" style="left:89.00px;top:181.15px;width:142.50px;height:40px;line-height:40px;font-size:25.6px;color:#FFF4F2;font-weight:400;text-align:center;overflow:hidden;">R13589</div>
<div class="t" style="left:231.50px;top:181.15px;width:134.00px;height:40px;line-height:40px;font-size:31.8px;color:#1A1A1A;font-weight:400;text-align:center;overflow:hidden;">38</div>
<div class="t" style="left:365.50px;top:181.15px;width:203.50px;height:40px;line-height:40px;font-size:25.5px;color:#1A1A1A;font-weight:400;text-align:center;overflow:hidden;">2</div>
<div class="t" style="left:569.00px;top:181.15px;width:98.00px;height:40px;line-height:40px;font-size:25.6px;color:#1A1A1A;font-weight:400;text-align:center;overflow:hidden;">2990</div>
<div class="t" style="left:667.00px;top:181.15px;width:134.50px;height:40px;line-height:40px;font-size:25.7px;color:#1A1A1A;font-weight:400;text-align:center;overflow:hidden;">Женский</div>
<div class="t" style="left:801.50px;top:181.15px;width:152.00px;height:40px;line-height:40px;font-size:24.8px;color:#1A1A1A;font-weight:400;text-align:center;overflow:hidden;">Туфли</div>
<div class="t" style="left:953.50px;top:181.15px;width:178.00px;height:40px;line-height:40px;font-size:25.4px;color:#1A1A1A;font-weight:400;text-align:center;overflow:hidden;">бежевый</div>
<div class="t" style="left:1131.50px;top:181.15px;width:256.00px;height:40px;line-height:40px;font-size:25.5px;color:#1A1A1A;font-weight:400;text-align:center;overflow:hidden;">летний</div>
<div class="t" style="left:1387.50px;top:181.15px;width:274.00px;height:40px;line-height:40px;font-size:25.3px;color:#1A1A1A;font-weight:400;text-align:center;overflow:hidden;">натуральная кожа</div>
<div class="t" style="left:1731px;top:181.15px;height:40px;line-height:40px;font-size:25.3px;color:#1A1A1A">натуральная кожа</div>
<div class="t" style="left:89.00px;top:228.33px;width:142.50px;height:40px;line-height:40px;font-size:25.6px;color:#FFF4F2;font-weight:400;text-align:center;overflow:hidden;">R13589</div>
<div class="t" style="left:231.50px;top:228.33px;width:134.00px;height:40px;line-height:40px;font-size:31.8px;color:#1A1A1A;font-weight:400;text-align:center;overflow:hidden;">39</div>
<div class="t" style="left:365.50px;top:228.33px;width:203.50px;height:40px;line-height:40px;font-size:25.5px;color:#1A1A1A;font-weight:400;text-align:center;overflow:hidden;">2</div>
<div class="t" style="left:569.00px;top:228.33px;width:98.00px;height:40px;line-height:40px;font-size:25.6px;color:#1A1A1A;font-weight:400;text-align:center;overflow:hidden;">2990</div>
<div class="t" style="left:667.00px;top:228.33px;width:134.50px;height:40px;line-height:40px;font-size:25.7px;color:#1A1A1A;font-weight:400;text-align:center;overflow:hidden;">Женский</div>
<div class="t" style="left:801.50px;top:228.33px;width:152.00px;height:40px;line-height:40px;font-size:24.8px;color:#1A1A1A;font-weight:400;text-align:center;overflow:hidden;">Туфли</div>
<div class="t" style="left:953.50px;top:228.33px;width:178.00px;height:40px;line-height:40px;font-size:25.4px;color:#1A1A1A;font-weight:400;text-align:center;overflow:hidden;">бежевый</div>
<div class="t" style="left:1131.50px;top:228.33px;width:256.00px;height:40px;line-height:40px;font-size:25.5px;color:#1A1A1A;font-weight:400;text-align:center;overflow:hidden;">летний</div>
<div class="t" style="left:1387.50px;top:228.33px;width:274.00px;height:40px;line-height:40px;font-size:25.3px;color:#1A1A1A;font-weight:400;text-align:center;overflow:hidden;">натуральная кожа</div>
<div class="t" style="left:1731px;top:228.33px;height:40px;line-height:40px;font-size:25.3px;color:#1A1A1A">натуральная кожа</div>
<div class="t" style="left:89.00px;top:275.51px;width:142.50px;height:40px;line-height:40px;font-size:25.6px;color:#FFF4F2;font-weight:400;text-align:center;overflow:hidden;">R13589</div>
<div class="t" style="left:231.50px;top:275.51px;width:134.00px;height:40px;line-height:40px;font-size:31.8px;color:#1A1A1A;font-weight:400;text-align:center;overflow:hidden;">40</div>
<div class="t" style="left:365.50px;top:275.51px;width:203.50px;height:40px;line-height:40px;font-size:25.5px;color:#1A1A1A;font-weight:400;text-align:center;overflow:hidden;">2</div>
<div class="t" style="left:569.00px;top:275.51px;width:98.00px;height:40px;line-height:40px;font-size:25.6px;color:#1A1A1A;font-weight:400;text-align:center;overflow:hidden;">2990</div>
<div class="t" style="left:667.00px;top:275.51px;width:134.50px;height:40px;line-height:40px;font-size:25.7px;color:#1A1A1A;font-weight:400;text-align:center;overflow:hidden;">Женский</div>
<div class="t" style="left:801.50px;top:275.51px;width:152.00px;height:40px;line-height:40px;font-size:24.8px;color:#1A1A1A;font-weight:400;text-align:center;overflow:hidden;">Туфли</div>
<div class="t" style="left:953.50px;top:275.51px;width:178.00px;height:40px;line-height:40px;font-size:25.4px;color:#1A1A1A;font-weight:400;text-align:center;overflow:hidden;">бежевый</div>
<div class="t" style="left:1131.50px;top:275.51px;width:256.00px;height:40px;line-height:40px;font-size:25.5px;color:#1A1A1A;font-weight:400;text-align:center;overflow:hidden;">летний</div>
<div class="t" style="left:1387.50px;top:275.51px;width:274.00px;height:40px;line-height:40px;font-size:25.3px;color:#1A1A1A;font-weight:400;text-align:center;overflow:hidden;">натуральная кожа</div>
<div class="t" style="left:1731px;top:275.51px;height:40px;line-height:40px;font-size:25.3px;color:#1A1A1A">натуральная кожа</div>
<div class="t" style="left:89.00px;top:322.69px;width:142.50px;height:40px;line-height:40px;font-size:25.6px;color:#FFF4F2;font-weight:400;text-align:center;overflow:hidden;">R13603</div>
<div class="t" style="left:231.50px;top:322.69px;width:134.00px;height:40px;line-height:40px;font-size:31.8px;color:#1A1A1A;font-weight:400;text-align:center;overflow:hidden;">36</div>
<div class="t" style="left:365.50px;top:322.69px;width:203.50px;height:40px;line-height:40px;font-size:25.5px;color:#1A1A1A;font-weight:400;text-align:center;overflow:hidden;">1</div>
<div class="t" style="left:569.00px;top:322.69px;width:98.00px;height:40px;line-height:40px;font-size:25.6px;color:#1A1A1A;font-weight:400;text-align:center;overflow:hidden;">2990</div>
<div class="t" style="left:667.00px;top:322.69px;width:134.50px;height:40px;line-height:40px;font-size:25.7px;color:#1A1A1A;font-weight:400;text-align:center;overflow:hidden;">Женский</div>
<div class="t" style="left:801.50px;top:322.69px;width:152.00px;height:40px;line-height:40px;font-size:24.8px;color:#1A1A1A;font-weight:400;text-align:center;overflow:hidden;">Туфли</div>
<div class="t" style="left:953.50px;top:322.69px;width:178.00px;height:40px;line-height:40px;font-size:25.4px;color:#1A1A1A;font-weight:400;text-align:center;overflow:hidden;">бежевый</div>
<div class="t" style="left:1131.50px;top:322.69px;width:256.00px;height:40px;line-height:40px;font-size:25.5px;color:#1A1A1A;font-weight:400;text-align:center;overflow:hidden;">летний</div>
<div class="t" style="left:1387.50px;top:322.69px;width:274.00px;height:40px;line-height:40px;font-size:25.3px;color:#1A1A1A;font-weight:400;text-align:center;overflow:hidden;">натуральная кожа</div>
<div class="t" style="left:1731px;top:322.69px;height:40px;line-height:40px;font-size:25.3px;color:#1A1A1A">натуральная кожа</div>
<div class="t" style="left:89.00px;top:369.87px;width:142.50px;height:40px;line-height:40px;font-size:25.6px;color:#FFF4F2;font-weight:400;text-align:center;overflow:hidden;">R13603</div>
<div class="t" style="left:231.50px;top:369.87px;width:134.00px;height:40px;line-height:40px;font-size:31.8px;color:#1A1A1A;font-weight:400;text-align:center;overflow:hidden;">37</div>
<div class="t" style="left:365.50px;top:369.87px;width:203.50px;height:40px;line-height:40px;font-size:25.5px;color:#1A1A1A;font-weight:400;text-align:center;overflow:hidden;">1</div>
<div class="t" style="left:569.00px;top:369.87px;width:98.00px;height:40px;line-height:40px;font-size:25.6px;color:#1A1A1A;font-weight:400;text-align:center;overflow:hidden;">2990</div>
<div class="t" style="left:667.00px;top:369.87px;width:134.50px;height:40px;line-height:40px;font-size:25.7px;color:#1A1A1A;font-weight:400;text-align:center;overflow:hidden;">Женский</div>
<div class="t" style="left:801.50px;top:369.87px;width:152.00px;height:40px;line-height:40px;font-size:24.8px;color:#1A1A1A;font-weight:400;text-align:center;overflow:hidden;">Туфли</div>
<div class="t" style="left:953.50px;top:369.87px;width:178.00px;height:40px;line-height:40px;font-size:25.4px;color:#1A1A1A;font-weight:400;text-align:center;overflow:hidden;">бежевый</div>
<div class="t" style="left:1131.50px;top:369.87px;width:256.00px;height:40px;line-height:40px;font-size:25.5px;color:#1A1A1A;font-weight:400;text-align:center;overflow:hidden;">летний</div>
<div class="t" style="left:1387.50px;top:369.87px;width:274.00px;height:40px;line-height:40px;font-size:25.3px;color:#1A1A1A;font-weight:400;text-align:center;overflow:hidden;">натуральная кожа</div>
<div class="t" style="left:1731px;top:369.87px;height:40px;line-height:40px;font-size:25.3px;color:#1A1A1A">натуральная кожа</div>
<div class="t" style="left:89.00px;top:417.05px;width:142.50px;height:40px;line-height:40px;font-size:25.6px;color:#FFF4F2;font-weight:400;text-align:center;overflow:hidden;">R13603</div>
<div class="t" style="left:231.50px;top:417.05px;width:134.00px;height:40px;line-height:40px;font-size:31.8px;color:#1A1A1A;font-weight:400;text-align:center;overflow:hidden;">38</div>
<div class="t" style="left:365.50px;top:417.05px;width:203.50px;height:40px;line-height:40px;font-size:25.5px;color:#1A1A1A;font-weight:400;text-align:center;overflow:hidden;">2</div>
<div class="t" style="left:569.00px;top:417.05px;width:98.00px;height:40px;line-height:40px;font-size:25.6px;color:#1A1A1A;font-weight:400;text-align:center;overflow:hidden;">2990</div>
<div class="t" style="left:667.00px;top:417.05px;width:134.50px;height:40px;line-height:40px;font-size:25.7px;color:#1A1A1A;font-weight:400;text-align:center;overflow:hidden;">Женский</div>
<div class="t" style="left:801.50px;top:417.05px;width:152.00px;height:40px;line-height:40px;font-size:24.8px;color:#1A1A1A;font-weight:400;text-align:center;overflow:hidden;">Туфли</div>
<div class="t" style="left:953.50px;top:417.05px;width:178.00px;height:40px;line-height:40px;font-size:25.4px;color:#1A1A1A;font-weight:400;text-align:center;overflow:hidden;">бежевый</div>
<div class="t" style="left:1131.50px;top:417.05px;width:256.00px;height:40px;line-height:40px;font-size:25.5px;color:#1A1A1A;font-weight:400;text-align:center;overflow:hidden;">летний</div>
<div class="t" style="left:1387.50px;top:417.05px;width:274.00px;height:40px;line-height:40px;font-size:25.3px;color:#1A1A1A;font-weight:400;text-align:center;overflow:hidden;">натуральная кожа</div>
<div class="t" style="left:1731px;top:417.05px;height:40px;line-height:40px;font-size:25.3px;color:#1A1A1A">натуральная кожа</div>
<div class="t" style="left:89.00px;top:464.23px;width:142.50px;height:40px;line-height:40px;font-size:25.6px;color:#FFF4F2;font-weight:400;text-align:center;overflow:hidden;">R13603</div>
<div class="t" style="left:231.50px;top:464.23px;width:134.00px;height:40px;line-height:40px;font-size:31.8px;color:#1A1A1A;font-weight:400;text-align:center;overflow:hidden;">39</div>
<div class="t" style="left:365.50px;top:464.23px;width:203.50px;height:40px;line-height:40px;font-size:25.5px;color:#1A1A1A;font-weight:400;text-align:center;overflow:hidden;">2</div>
<div class="t" style="left:569.00px;top:464.23px;width:98.00px;height:40px;line-height:40px;font-size:25.6px;color:#1A1A1A;font-weight:400;text-align:center;overflow:hidden;">2990</div>
<div class="t" style="left:667.00px;top:464.23px;width:134.50px;height:40px;line-height:40px;font-size:25.7px;color:#1A1A1A;font-weight:400;text-align:center;overflow:hidden;">Женский</div>
<div class="t" style="left:801.50px;top:464.23px;width:152.00px;height:40px;line-height:40px;font-size:24.8px;color:#1A1A1A;font-weight:400;text-align:center;overflow:hidden;">Туфли</div>
<div class="t" style="left:953.50px;top:464.23px;width:178.00px;height:40px;line-height:40px;font-size:25.4px;color:#1A1A1A;font-weight:400;text-align:center;overflow:hidden;">бежевый</div>
<div class="t" style="left:1131.50px;top:464.23px;width:256.00px;height:40px;line-height:40px;font-size:25.5px;color:#1A1A1A;font-weight:400;text-align:center;overflow:hidden;">летний</div>
<div class="t" style="left:1387.50px;top:464.23px;width:274.00px;height:40px;line-height:40px;font-size:25.3px;color:#1A1A1A;font-weight:400;text-align:center;overflow:hidden;">натуральная кожа</div>
<div class="t" style="left:1731px;top:464.23px;height:40px;line-height:40px;font-size:25.3px;color:#1A1A1A">натуральная кожа</div>
<div class="t" style="left:89.00px;top:511.41px;width:142.50px;height:40px;line-height:40px;font-size:25.6px;color:#FFF4F2;font-weight:400;text-align:center;overflow:hidden;">R13603</div>
<div class="t" style="left:231.50px;top:511.41px;width:134.00px;height:40px;line-height:40px;font-size:31.8px;color:#1A1A1A;font-weight:400;text-align:center;overflow:hidden;">40</div>
<div class="t" style="left:365.50px;top:511.41px;width:203.50px;height:40px;line-height:40px;font-size:25.5px;color:#1A1A1A;font-weight:400;text-align:center;overflow:hidden;">2</div>
<div class="t" style="left:569.00px;top:511.41px;width:98.00px;height:40px;line-height:40px;font-size:25.6px;color:#1A1A1A;font-weight:400;text-align:center;overflow:hidden;">2990</div>
<div class="t" style="left:667.00px;top:511.41px;width:134.50px;height:40px;line-height:40px;font-size:25.7px;color:#1A1A1A;font-weight:400;text-align:center;overflow:hidden;">Женский</div>
<div class="t" style="left:801.50px;top:511.41px;width:152.00px;height:40px;line-height:40px;font-size:24.8px;color:#1A1A1A;font-weight:400;text-align:center;overflow:hidden;">Туфли</div>
<div class="t" style="left:953.50px;top:511.41px;width:178.00px;height:40px;line-height:40px;font-size:25.4px;color:#1A1A1A;font-weight:400;text-align:center;overflow:hidden;">бежевый</div>
<div class="t" style="left:1131.50px;top:511.41px;width:256.00px;height:40px;line-height:40px;font-size:25.5px;color:#1A1A1A;font-weight:400;text-align:center;overflow:hidden;">летний</div>
<div class="t" style="left:1387.50px;top:511.41px;width:274.00px;height:40px;line-height:40px;font-size:25.3px;color:#1A1A1A;font-weight:400;text-align:center;overflow:hidden;">натуральная кожа</div>
<div class="t" style="left:1731px;top:511.41px;height:40px;line-height:40px;font-size:25.3px;color:#1A1A1A">натуральная кожа</div>
<div class="t" style="left:89.00px;top:558.59px;width:142.50px;height:40px;line-height:40px;font-size:25.6px;color:#FFF4F2;font-weight:400;text-align:center;overflow:hidden;">R13928</div>
<div class="t" style="left:231.50px;top:558.59px;width:134.00px;height:40px;line-height:40px;font-size:31.8px;color:#1A1A1A;font-weight:400;text-align:center;overflow:hidden;">37</div>
<div class="t" style="left:365.50px;top:558.59px;width:203.50px;height:40px;line-height:40px;font-size:25.5px;color:#1A1A1A;font-weight:400;text-align:center;overflow:hidden;">2</div>
<div class="t" style="left:569.00px;top:558.59px;width:98.00px;height:40px;line-height:40px;font-size:25.6px;color:#1A1A1A;font-weight:400;text-align:center;overflow:hidden;">2370</div>
<div class="t" style="left:667.00px;top:558.59px;width:134.50px;height:40px;line-height:40px;font-size:25.7px;color:#1A1A1A;font-weight:400;text-align:center;overflow:hidden;">Женский</div>
<div class="t" style="left:801.50px;top:558.59px;width:152.00px;height:40px;line-height:40px;font-size:24.8px;color:#1A1A1A;font-weight:400;text-align:center;overflow:hidden;">Туфли</div>
<div class="t" style="left:953.50px;top:558.59px;width:178.00px;height:40px;line-height:40px;font-size:25.4px;color:#1A1A1A;font-weight:400;text-align:center;overflow:hidden;">желтый</div>
<div class="t" style="left:1131.50px;top:558.59px;width:256.00px;height:40px;line-height:40px;font-size:25.5px;color:#1A1A1A;font-weight:400;text-align:center;overflow:hidden;">летний</div>
<div class="t" style="left:1387.50px;top:558.59px;width:274.00px;height:40px;line-height:40px;font-size:25.3px;color:#1A1A1A;font-weight:400;text-align:center;overflow:hidden;">натуральная кожа</div>
<div class="t" style="left:1731px;top:558.59px;height:40px;line-height:40px;font-size:25.3px;color:#1A1A1A">натуральная кожа</div>
<div class="t" style="left:89.00px;top:605.77px;width:142.50px;height:40px;line-height:40px;font-size:25.6px;color:#FFF4F2;font-weight:400;text-align:center;overflow:hidden;">R13928</div>
<div class="t" style="left:231.50px;top:605.77px;width:134.00px;height:40px;line-height:40px;font-size:31.8px;color:#1A1A1A;font-weight:400;text-align:center;overflow:hidden;">38</div>
<div class="t" style="left:365.50px;top:605.77px;width:203.50px;height:40px;line-height:40px;font-size:25.5px;color:#1A1A1A;font-weight:400;text-align:center;overflow:hidden;">2</div>
<div class="t" style="left:569.00px;top:605.77px;width:98.00px;height:40px;line-height:40px;font-size:25.6px;color:#1A1A1A;font-weight:400;text-align:center;overflow:hidden;">2370</div>
<div class="t" style="left:667.00px;top:605.77px;width:134.50px;height:40px;line-height:40px;font-size:25.7px;color:#1A1A1A;font-weight:400;text-align:center;overflow:hidden;">Женский</div>
<div class="t" style="left:801.50px;top:605.77px;width:152.00px;height:40px;line-height:40px;font-size:24.8px;color:#1A1A1A;font-weight:400;text-align:center;overflow:hidden;">Туфли</div>
<div class="t" style="left:953.50px;top:605.77px;width:178.00px;height:40px;line-height:40px;font-size:25.4px;color:#1A1A1A;font-weight:400;text-align:center;overflow:hidden;">желтый</div>
<div class="t" style="left:1131.50px;top:605.77px;width:256.00px;height:40px;line-height:40px;font-size:25.5px;color:#1A1A1A;font-weight:400;text-align:center;overflow:hidden;">летний</div>
<div class="t" style="left:1387.50px;top:605.77px;width:274.00px;height:40px;line-height:40px;font-size:25.3px;color:#1A1A1A;font-weight:400;text-align:center;overflow:hidden;">натуральная кожа</div>
<div class="t" style="left:1731px;top:605.77px;height:40px;line-height:40px;font-size:25.3px;color:#1A1A1A">натуральная кожа</div>
<div class="t" style="left:89.00px;top:652.95px;width:142.50px;height:40px;line-height:40px;font-size:25.6px;color:#FFF4F2;font-weight:400;text-align:center;overflow:hidden;">R13928</div>
<div class="t" style="left:231.50px;top:652.95px;width:134.00px;height:40px;line-height:40px;font-size:31.8px;color:#1A1A1A;font-weight:400;text-align:center;overflow:hidden;">39</div>
<div class="t" style="left:365.50px;top:652.95px;width:203.50px;height:40px;line-height:40px;font-size:25.5px;color:#1A1A1A;font-weight:400;text-align:center;overflow:hidden;">2</div>
<div class="t" style="left:569.00px;top:652.95px;width:98.00px;height:40px;line-height:40px;font-size:25.6px;color:#1A1A1A;font-weight:400;text-align:center;overflow:hidden;">2370</div>
<div class="t" style="left:667.00px;top:652.95px;width:134.50px;height:40px;line-height:40px;font-size:25.7px;color:#1A1A1A;font-weight:400;text-align:center;overflow:hidden;">Женский</div>
<div class="t" style="left:801.50px;top:652.95px;width:152.00px;height:40px;line-height:40px;font-size:24.8px;color:#1A1A1A;font-weight:400;text-align:center;overflow:hidden;">Туфли</div>
<div class="t" style="left:953.50px;top:652.95px;width:178.00px;height:40px;line-height:40px;font-size:25.4px;color:#1A1A1A;font-weight:400;text-align:center;overflow:hidden;">желтый</div>
<div class="t" style="left:1131.50px;top:652.95px;width:256.00px;height:40px;line-height:40px;font-size:25.5px;color:#1A1A1A;font-weight:400;text-align:center;overflow:hidden;">летний</div>
<div class="t" style="left:1387.50px;top:652.95px;width:274.00px;height:40px;line-height:40px;font-size:25.3px;color:#1A1A1A;font-weight:400;text-align:center;overflow:hidden;">натуральная кожа</div>
<div class="t" style="left:1731px;top:652.95px;height:40px;line-height:40px;font-size:25.3px;color:#1A1A1A">натуральная кожа</div>
<div class="t" style="left:89.00px;top:700.13px;width:142.50px;height:40px;line-height:40px;font-size:25.6px;color:#FFF4F2;font-weight:400;text-align:center;overflow:hidden;">R13928</div>
<div class="t" style="left:231.50px;top:700.13px;width:134.00px;height:40px;line-height:40px;font-size:31.8px;color:#1A1A1A;font-weight:400;text-align:center;overflow:hidden;">40</div>
<div class="t" style="left:365.50px;top:700.13px;width:203.50px;height:40px;line-height:40px;font-size:25.5px;color:#1A1A1A;font-weight:400;text-align:center;overflow:hidden;">2</div>
<div class="t" style="left:569.00px;top:700.13px;width:98.00px;height:40px;line-height:40px;font-size:25.6px;color:#1A1A1A;font-weight:400;text-align:center;overflow:hidden;">2370</div>
<div class="t" style="left:667.00px;top:700.13px;width:134.50px;height:40px;line-height:40px;font-size:25.7px;color:#1A1A1A;font-weight:400;text-align:center;overflow:hidden;">Женский</div>
<div class="t" style="left:801.50px;top:700.13px;width:152.00px;height:40px;line-height:40px;font-size:24.8px;color:#1A1A1A;font-weight:400;text-align:center;overflow:hidden;">Туфли</div>
<div class="t" style="left:953.50px;top:700.13px;width:178.00px;height:40px;line-height:40px;font-size:25.4px;color:#1A1A1A;font-weight:400;text-align:center;overflow:hidden;">желтый</div>
<div class="t" style="left:1131.50px;top:700.13px;width:256.00px;height:40px;line-height:40px;font-size:25.5px;color:#1A1A1A;font-weight:400;text-align:center;overflow:hidden;">летний</div>
<div class="t" style="left:1387.50px;top:700.13px;width:274.00px;height:40px;line-height:40px;font-size:25.3px;color:#1A1A1A;font-weight:400;text-align:center;overflow:hidden;">натуральная кожа</div>
<div class="t" style="left:1731px;top:700.13px;height:40px;line-height:40px;font-size:25.3px;color:#1A1A1A">натуральная кожа</div>
<div class="t" style="left:89.00px;top:747.31px;width:142.50px;height:40px;line-height:40px;font-size:25.6px;color:#FFF4F2;font-weight:400;text-align:center;overflow:hidden;">R13930</div>
<div class="t" style="left:231.50px;top:747.31px;width:134.00px;height:40px;line-height:40px;font-size:31.8px;color:#1A1A1A;font-weight:400;text-align:center;overflow:hidden;">37</div>
<div class="t" style="left:365.50px;top:747.31px;width:203.50px;height:40px;line-height:40px;font-size:25.5px;color:#1A1A1A;font-weight:400;text-align:center;overflow:hidden;">2</div>
<div class="t" style="left:569.00px;top:747.31px;width:98.00px;height:40px;line-height:40px;font-size:25.6px;color:#1A1A1A;font-weight:400;text-align:center;overflow:hidden;">2370</div>
<div class="t" style="left:667.00px;top:747.31px;width:134.50px;height:40px;line-height:40px;font-size:25.7px;color:#1A1A1A;font-weight:400;text-align:center;overflow:hidden;">Женский</div>
<div class="t" style="left:801.50px;top:747.31px;width:152.00px;height:40px;line-height:40px;font-size:24.8px;color:#1A1A1A;font-weight:400;text-align:center;overflow:hidden;">Туфли</div>
<div class="t" style="left:953.50px;top:747.31px;width:178.00px;height:40px;line-height:40px;font-size:25.4px;color:#1A1A1A;font-weight:400;text-align:center;overflow:hidden;">белый</div>
<div class="t" style="left:1131.50px;top:747.31px;width:256.00px;height:40px;line-height:40px;font-size:25.5px;color:#1A1A1A;font-weight:400;text-align:center;overflow:hidden;">летний</div>
<div class="t" style="left:1387.50px;top:747.31px;width:274.00px;height:40px;line-height:40px;font-size:25.3px;color:#1A1A1A;font-weight:400;text-align:center;overflow:hidden;">натуральная кожа</div>
<div class="t" style="left:1731px;top:747.31px;height:40px;line-height:40px;font-size:25.3px;color:#1A1A1A">натуральная кожа</div>
<div class="t" style="left:89.00px;top:794.49px;width:142.50px;height:40px;line-height:40px;font-size:25.6px;color:#FFF4F2;font-weight:400;text-align:center;overflow:hidden;">R13930</div>
<div class="t" style="left:231.50px;top:794.49px;width:134.00px;height:40px;line-height:40px;font-size:31.8px;color:#1A1A1A;font-weight:400;text-align:center;overflow:hidden;">38</div>
<div class="t" style="left:365.50px;top:794.49px;width:203.50px;height:40px;line-height:40px;font-size:25.5px;color:#1A1A1A;font-weight:400;text-align:center;overflow:hidden;">2</div>
<div class="t" style="left:569.00px;top:794.49px;width:98.00px;height:40px;line-height:40px;font-size:25.6px;color:#1A1A1A;font-weight:400;text-align:center;overflow:hidden;">2370</div>
<div class="t" style="left:667.00px;top:794.49px;width:134.50px;height:40px;line-height:40px;font-size:25.7px;color:#1A1A1A;font-weight:400;text-align:center;overflow:hidden;">Женский</div>
<div class="t" style="left:801.50px;top:794.49px;width:152.00px;height:40px;line-height:40px;font-size:24.8px;color:#1A1A1A;font-weight:400;text-align:center;overflow:hidden;">Туфли</div>
<div class="t" style="left:953.50px;top:794.49px;width:178.00px;height:40px;line-height:40px;font-size:25.4px;color:#1A1A1A;font-weight:400;text-align:center;overflow:hidden;">белый</div>
<div class="t" style="left:1131.50px;top:794.49px;width:256.00px;height:40px;line-height:40px;font-size:25.5px;color:#1A1A1A;font-weight:400;text-align:center;overflow:hidden;">летний</div>
<div class="t" style="left:1387.50px;top:794.49px;width:274.00px;height:40px;line-height:40px;font-size:25.3px;color:#1A1A1A;font-weight:400;text-align:center;overflow:hidden;">натуральная кожа</div>
<div class="t" style="left:1731px;top:794.49px;height:40px;line-height:40px;font-size:25.3px;color:#1A1A1A">натуральная кожа</div>
<div class="t" style="left:89.00px;top:841.67px;width:142.50px;height:40px;line-height:40px;font-size:25.6px;color:#FFF4F2;font-weight:400;text-align:center;overflow:hidden;">R13930</div>
<div class="t" style="left:231.50px;top:841.67px;width:134.00px;height:40px;line-height:40px;font-size:31.8px;color:#1A1A1A;font-weight:400;text-align:center;overflow:hidden;">39</div>
<div class="t" style="left:365.50px;top:841.67px;width:203.50px;height:40px;line-height:40px;font-size:25.5px;color:#1A1A1A;font-weight:400;text-align:center;overflow:hidden;">2</div>
<div class="t" style="left:569.00px;top:841.67px;width:98.00px;height:40px;line-height:40px;font-size:25.6px;color:#1A1A1A;font-weight:400;text-align:center;overflow:hidden;">2370</div>
<div class="t" style="left:667.00px;top:841.67px;width:134.50px;height:40px;line-height:40px;font-size:25.7px;color:#1A1A1A;font-weight:400;text-align:center;overflow:hidden;">Женский</div>
<div class="t" style="left:801.50px;top:841.67px;width:152.00px;height:40px;line-height:40px;font-size:24.8px;color:#1A1A1A;font-weight:400;text-align:center;overflow:hidden;">Туфли</div>
<div class="t" style="left:953.50px;top:841.67px;width:178.00px;height:40px;line-height:40px;font-size:25.4px;color:#1A1A1A;font-weight:400;text-align:center;overflow:hidden;">белый</div>
<div class="t" style="left:1131.50px;top:841.67px;width:256.00px;height:40px;line-height:40px;font-size:25.5px;color:#1A1A1A;font-weight:400;text-align:center;overflow:hidden;">летний</div>
<div class="t" style="left:1387.50px;top:841.67px;width:274.00px;height:40px;line-height:40px;font-size:25.3px;color:#1A1A1A;font-weight:400;text-align:center;overflow:hidden;">натуральная кожа</div>
<div class="t" style="left:1731px;top:841.67px;height:40px;line-height:40px;font-size:25.3px;color:#1A1A1A">натуральная кожа</div>
<div class="b" style="left:224.50px;top:170.00px;width:148.00px;height:61.00px;border:5px solid #F6C845"></div>
</div>
<div class="b" style="left:2897.5px;top:425px;width:18px;height:800px;background:#E4E2E6;border-radius:9px"></div>
<div class="b" style="left:2900px;top:428px;width:13.5px;height:137px;background:#A3A1A6;border-radius:7px"></div>
<svg style="left:2902px;top:399px" width="10" height="8" viewBox="0 0 10 8"><path d="M0 8 L5 0 L10 8Z" fill="#BDBDBD"/></svg>
<svg style="left:2903px;top:1242px" width="10" height="8" viewBox="0 0 10 8"><path d="M0 0 L5 8 L10 0Z" fill="#555"/></svg>
<div class="b" style="left:1069px;top:1275px;width:1777px;height:15px;background:#DEDCE0;border-radius:8px"></div>
<div class="b" style="left:1069px;top:1275px;width:1025px;height:15px;background:#A09EA3;border-radius:8px"></div>
<svg style="left:1042px;top:1278px" width="8" height="10" viewBox="0 0 8 10"><path d="M8 0 L0 5 L8 10Z" fill="#C8C8C8"/></svg>
<svg style="left:2866px;top:1278px" width="8" height="10" viewBox="0 0 8 10"><path d="M0 0 L8 5 L0 10Z" fill="#555"/></svg>
<svg style="left:1323px;top:588px" width="92" height="92" viewBox="0 0 92 92">
<path d="M31 5 H65 V30 H89 V64 H65 V89 H31 V64 H5 V30 H31Z" fill="#000"/>
<path d="M26 0 H60 V25 H84 V59 H60 V84 H26 V59 H0 V25 H26Z" fill="#000"/>
<path d="M31 5 H55 V30 H79 V54 H55 V79 H31 V54 H5 V30 H31Z" fill="#fff"/></svg>
<div class="b" style="left:958px;top:1325px;width:2042px;height:52px;background:linear-gradient(rgba(255,255,255,0),rgba(215,213,218,0.55))"></div>
<div class="b" style="left:440px;top:1332px;width:518px;height:45px;background:linear-gradient(rgba(0,0,0,0),rgba(110,90,20,0.10))"></div>
<div class="b" style="left:440px;top:1377px;width:2560px;height:63px;background:linear-gradient(#E4E2E5,#D8D6DA)"></div>
<div class="b" style="left:440px;top:1377px;width:2560px;height:1.5px;background:#CFCDD1"></div>
<div class="b" style="left:513px;top:1378px;width:427px;height:62px;background:linear-gradient(#ECEBED,#E0DEE2)"></div>
<div class="b" style="left:511.95000000000005px;top:1378px;width:1.5px;height:62px;background:#BDBBC0"></div>
<div class="b" style="left:938.85px;top:1378px;width:1.5px;height:62px;background:#BDBBC0"></div>
<div class="b" style="left:1364.25px;top:1378px;width:1.5px;height:62px;background:#BDBBC0"></div>
<div class="b" style="left:1791.65px;top:1378px;width:1.5px;height:62px;background:#BDBBC0"></div>
<div class="b" style="left:2084.25px;top:1378px;width:1.5px;height:62px;background:#BDBBC0"></div>
<div class="b" style="left:2511.25px;top:1378px;width:1.5px;height:62px;background:#BDBBC0"></div>
<div class="b" style="left:2939.25px;top:1378px;width:1.5px;height:62px;background:#BDBBC0"></div>
<svg style="left:461px;top:1393px" width="30" height="27" viewBox="0 0 30 27"><path d="M15 1 L29 13 H25 V26 H18 V18 H12 V26 H5 V13 H1Z" fill="#3F3F3F"/></svg>
<div class="t" style="left:535.5px;top:1390.0px;height:40px;line-height:40px;font-size:25.5px;color:#404044;">Умная Загрузка номенклату…</div>
<svg style="left:907.0px;top:1403px" width="15" height="15" viewBox="0 0 15 15"><path d="M1.5 1.5 L13.5 13.5 M13.5 1.5 L1.5 13.5" stroke="#505054" stroke-width="2.2"/></svg>
<div class="t" style="left:962px;top:1390.0px;height:40px;line-height:40px;font-size:25.5px;color:#404044;">МатериалПодошвы (Допол…</div>
<svg style="left:1333.5px;top:1403px" width="15" height="15" viewBox="0 0 15 15"><path d="M1.5 1.5 L13.5 13.5 M13.5 1.5 L1.5 13.5" stroke="#505054" stroke-width="2.2"/></svg>
<div class="t" style="left:1388px;top:1390.0px;height:40px;line-height:40px;font-size:25.5px;color:#404044;">Сезон (Дополнительный ре…</div>
<svg style="left:1760.5px;top:1403px" width="15" height="15" viewBox="0 0 15 15"><path d="M1.5 1.5 L13.5 13.5 M13.5 1.5 L1.5 13.5" stroke="#505054" stroke-width="2.2"/></svg>
<div class="t" style="left:1813.6px;top:1390.0px;height:40px;line-height:40px;font-size:25.5px;color:#404044;">&lt;&gt; (Номенклатура)</div>
<svg style="left:2053.5px;top:1403px" width="15" height="15" viewBox="0 0 15 15"><path d="M1.5 1.5 L13.5 13.5 M13.5 1.5 L1.5 13.5" stroke="#505054" stroke-width="2.2"/></svg>
<div class="t" style="left:2106.6px;top:1390.0px;height:40px;line-height:40px;font-size:25.5px;color:#404044;">Дополнительные реквизит…</div>
<svg style="left:2480.5px;top:1403px" width="15" height="15" viewBox="0 0 15 15"><path d="M1.5 1.5 L13.5 13.5 M13.5 1.5 L1.5 13.5" stroke="#505054" stroke-width="2.2"/></svg>
<div class="t" style="left:2533px;top:1390.0px;height:40px;line-height:40px;font-size:25.5px;color:#404044;">Шаблоны слов для регуляр…</div>
<svg style="left:2907.0px;top:1403px" width="15" height="15" viewBox="0 0 15 15"><path d="M1.5 1.5 L13.5 13.5 M13.5 1.5 L1.5 13.5" stroke="#505054" stroke-width="2.2"/></svg>
<div class="b" style="left:519px;top:1433px;width:414px;height:4px;background:#2F8A5A;border-radius:1px"></div>
<svg style="left:2958px;top:1403px" width="24" height="14" viewBox="0 0 24 14"><path d="M0 14 L12 1 L24 14Z" fill="#3F3F3F"/></svg>
<div class="b" style="left:0px;top:1300px;width:3440px;height:140px;background:linear-gradient(rgba(0,0,0,0),rgba(0,0,0,0.05))"></div>
<div class="b" style="left:0px;top:1335px;width:440px;height:105px;background:linear-gradient(#000,#08090C)"></div>
<div class="b" style="left:3000px;top:1335px;width:440px;height:105px;background:linear-gradient(#000,#08090C)"></div>
<div class="b" style="left:29px;top:1389px;width:7.6px;height:25px;background:#fff;border-radius:1.5px"></div>
<div class="b" style="left:42.3px;top:1389px;width:7.6px;height:25px;background:#fff;border-radius:1.5px"></div>
<div class="b" style="left:2893px;top:1397px;width:174px;height:8.3px;background:rgba(255,255,255,0.35);border-radius:4px"></div>
<div class="b" style="left:3000px;top:1397px;width:48px;height:8.3px;background:rgba(255,255,255,0.22)"></div>
<div class="b" style="left:71px;top:1397px;width:2822px;height:8.3px;background:#BA55B8;border-radius:4.2px"></div>
<div class="b" style="left:2882.5px;top:1390.5px;width:21px;height:21px;background:#fff;border-radius:50%;border:1px solid #8E8C92"></div>
<div class="b" style="left:2774px;top:1331px;width:80.5px;height:41px;background:#fff;border-radius:6px;box-shadow:0 0 2px rgba(0,0,0,0.08)"></div>
<svg style="left:2805px;top:1371px" width="16" height="7" viewBox="0 0 16 7"><path d="M0 0 H16 L8 7Z" fill="#fff"/></svg>
<div class="t" style="left:2786.5px;top:1333.0px;height:33px;line-height:33px;font-size:20.7px;color:#3F4A5C;letter-spacing:0.8px;-webkit-text-stroke:0">33:25</div>
<div class="t" style="left:3078.5px;top:1382.0px;height:36px;line-height:36px;font-size:22.85px;color:#FFFFFF;letter-spacing:0.3px">-02:00</div>
<svg style="left:3166px;top:1388px" width="30" height="26" viewBox="0 0 30 26">
<path d="M0 8 H6 L14 1 V25 L6 18 H0Z" fill="#fff"/>
<path d="M18 8.5 Q21 13 18 17.5" fill="none" stroke="#fff" stroke-width="3" stroke-linecap="round"/>
<path d="M22.5 4.5 Q28 13 22.5 21.5" fill="none" stroke="#fff" stroke-width="3" stroke-linecap="round"/></svg>
<div class="b" style="left:3212px;top:1397px;width:96px;height:8.3px;background:#BA55B8;border-radius:4.2px"></div>
<div class="b" style="left:3294px;top:1391px;width:20px;height:20px;background:#fff;border-radius:50%"></div>
<svg style="left:3337px;top:1389px" width="25" height="25" viewBox="0 0 27 27">
<path d="M11 0.5 H16 L16.8 4 L19.6 5.3 L22.7 3.4 L26 6.7 L24 9.6 L25.2 12.4 L26.6 13.5 L26.6 13.5 L25.2 14.6 L24 17.4 L26 20.3 L22.7 23.6 L19.6 21.7 L16.8 23 L16 26.5 H11 L10.2 23 L7.4 21.7 L4.3 23.6 L1 20.3 L3 17.4 L1.8 14.6 L0.4 13.5 L1.8 12.4 L3 9.6 L1 6.7 L4.3 3.4 L7.4 5.3 L10.2 4Z" fill="#fff"/>
<circle cx="13.5" cy="13.5" r="4.6" fill="#060709"/></svg>
<svg style="left:3388px;top:1388px" width="28" height="27" viewBox="0 0 28 27">
<path d="M26 1.5 L17.5 10 M17 4 V10.5 H23.5" fill="none" stroke="#fff" stroke-width="3" stroke-linecap="round" stroke-linejoin="round"/>
<path d="M2 25.5 L10.5 17 M4.5 16.5 H11 V23" fill="none" stroke="#fff" stroke-width="3" stroke-linecap="round" stroke-linejoin="round"/></svg>
</body></html>
